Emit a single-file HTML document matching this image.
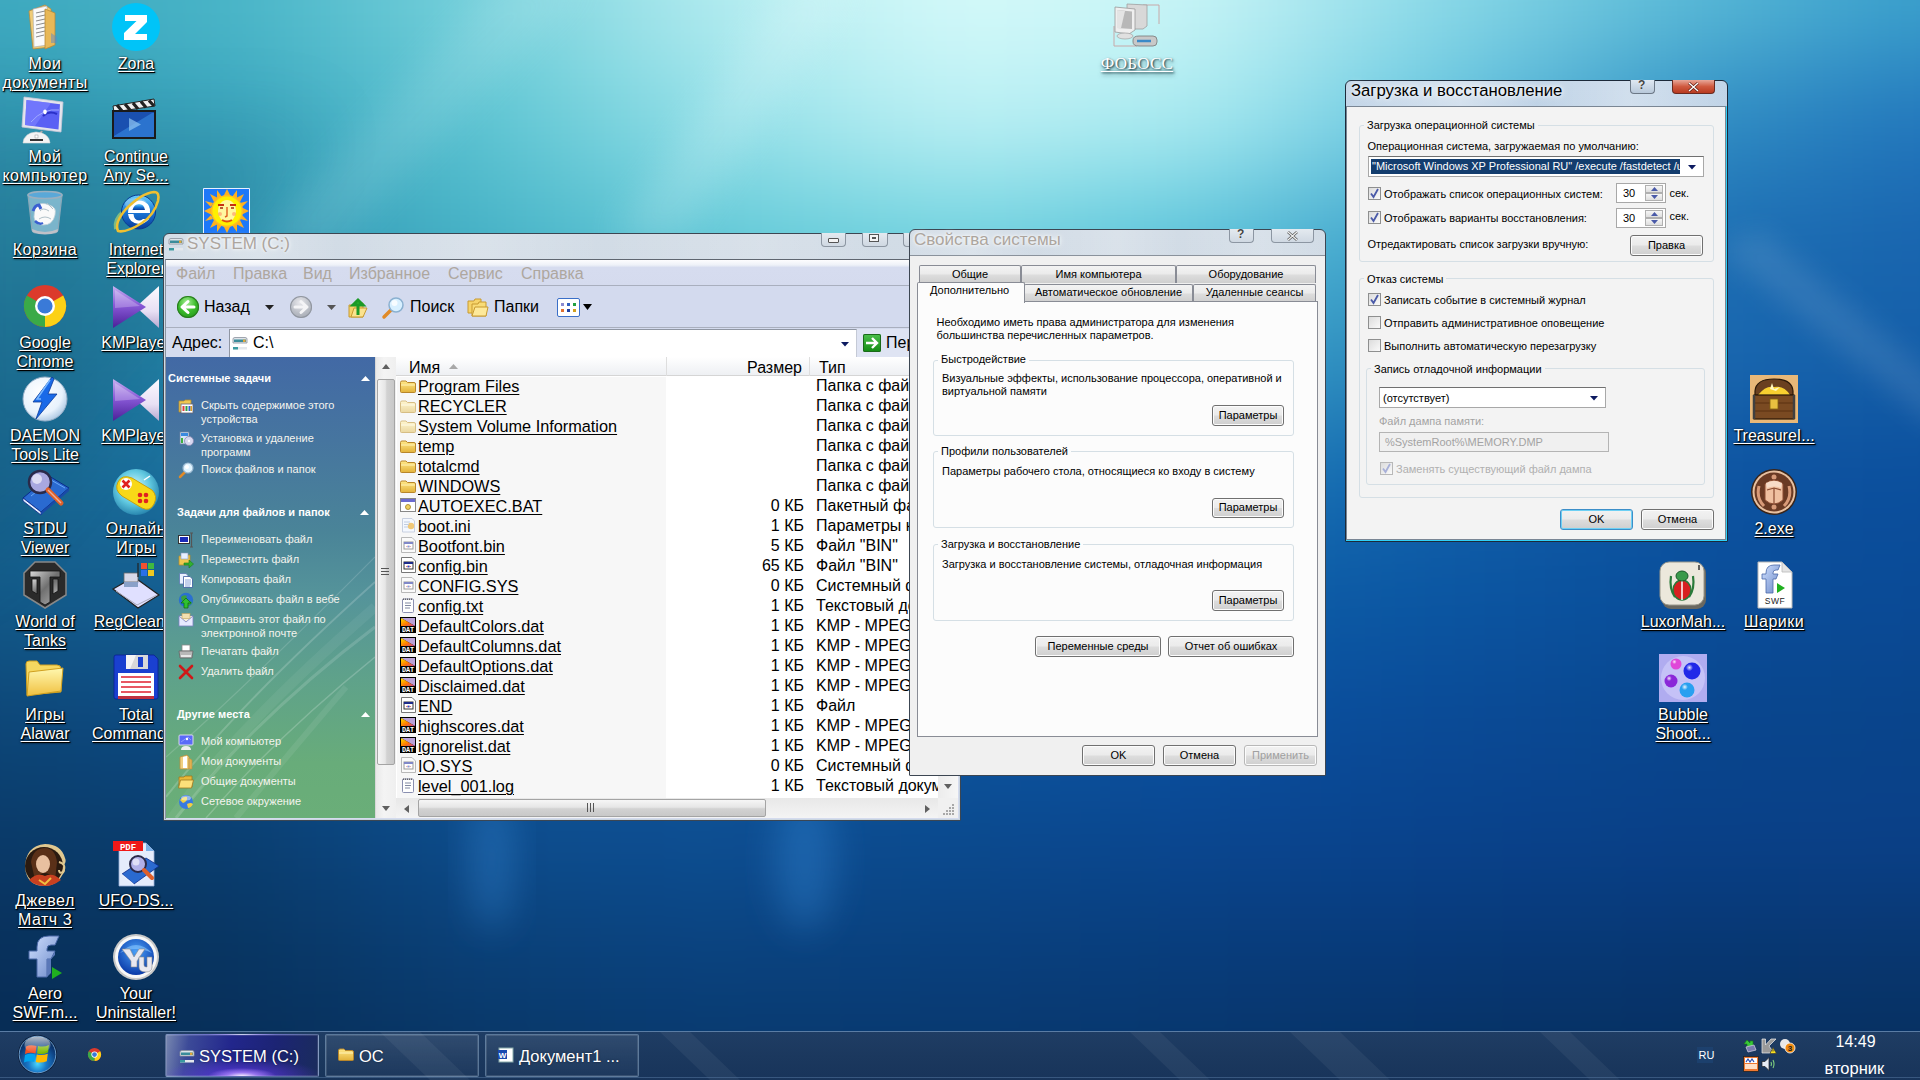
<!DOCTYPE html><html><head><meta charset="utf-8"><style>
*{margin:0;padding:0;box-sizing:border-box}
html,body{width:1920px;height:1080px;overflow:hidden}
body{position:relative;font-family:"Liberation Sans",sans-serif;background:#0b4a8a}
.a{position:absolute}
.t{position:absolute;white-space:nowrap;line-height:1}
.u{text-decoration:underline;text-underline-offset:2px}
svg{position:absolute;overflow:visible}
</style></head><body>

<svg width="0" height="0" style="position:absolute">
<defs>
 <linearGradient id="gFold" x1="0" y1="0" x2="0" y2="1"><stop offset="0" stop-color="#ffe98a"/><stop offset="1" stop-color="#e2b23a"/></linearGradient>
 <linearGradient id="gFoldP" x1="0" y1="0" x2="0" y2="1"><stop offset="0" stop-color="#fff6d0"/><stop offset="1" stop-color="#ead7a0"/></linearGradient>
 <linearGradient id="gDat" x1="0" y1="0" x2="1" y2="1"><stop offset="0" stop-color="#ffe600"/><stop offset=".55" stop-color="#ff7a00"/><stop offset="1" stop-color="#c040a0"/></linearGradient>
 <symbol id="folder" viewBox="0 0 16 13"><path d="M0.5 2.5 Q0.5 1 2 1 H6 L7.5 2.5 H14 Q15.5 2.5 15.5 4 V11.5 Q15.5 12.5 14.5 12.5 H1.5 Q0.5 12.5 0.5 11.5Z" fill="url(#gFold)" stroke="#b8862a" stroke-width="1"/><path d="M1 5 H15" stroke="#fff3b8" stroke-width="1"/></symbol>
 <symbol id="folderP" viewBox="0 0 16 13"><path d="M0.5 2.5 Q0.5 1 2 1 H6 L7.5 2.5 H14 Q15.5 2.5 15.5 4 V11.5 Q15.5 12.5 14.5 12.5 H1.5 Q0.5 12.5 0.5 11.5Z" fill="url(#gFoldP)" stroke="#d6bd84" stroke-width="1"/><path d="M1 5 H15" stroke="#fffbe8" stroke-width="1"/></symbol>
 <symbol id="dat" viewBox="0 0 16 16"><rect x="0" y="0" width="16" height="16" fill="#000"/><path d="M1 1 H15 V9 Z" fill="#b9a0d8"/><path d="M1 1 L15 9 H1Z" fill="url(#gDat)"/><text x="8" y="15.2" font-family="Liberation Mono" font-weight="bold" font-size="6.8" fill="#fff" text-anchor="middle">DAT</text></symbol>
 <symbol id="sys" viewBox="0 0 16 16"><path d="M1.5 0.5 H12 L15.5 4 V15.5 H1.5Z" fill="#fff" stroke="#777" /><rect x="4" y="5" width="9" height="7" fill="#fff" stroke="#333" stroke-width="1"/><rect x="4" y="5" width="9" height="2" fill="#1c2a8a"/><path d="M6 9.5 L7.5 8.5 V10.5Z M11 9.5 L9.5 8.5 V10.5Z" fill="#d02020"/><circle cx="8.5" cy="9.5" r="1" fill="#2050d0"/></symbol>
 <symbol id="sysP" viewBox="0 0 16 16"><path d="M1.5 0.5 H12 L15.5 4 V15.5 H1.5Z" fill="#fafafa" stroke="#b8b8b8" /><rect x="4" y="5" width="9" height="7" fill="#fff" stroke="#999" stroke-width="1"/><rect x="4" y="5" width="9" height="2" fill="#8088c8"/><path d="M6 9.5 L7.5 8.5 V10.5Z M11 9.5 L9.5 8.5 V10.5Z" fill="#e08080"/><circle cx="8.5" cy="9.5" r="1" fill="#80a0e0"/></symbol>
 <symbol id="bat" viewBox="0 0 16 16"><rect x="0.5" y="1.5" width="15" height="13" fill="#fff" stroke="#888"/><rect x="1" y="2" width="14" height="3" fill="#6a6ad0"/><circle cx="8" cy="10" r="2.5" fill="#f0d060" stroke="#a08020" stroke-width=".8"/></symbol>
 <symbol id="ini" viewBox="0 0 16 16"><path d="M2.5 1.5 H12 L14.5 4 V15 H2.5Z" fill="#f4f8ff" stroke="#c8d0e0"/><circle cx="11" cy="9" r="3.2" fill="#f0c878"/><path d="M4 5 H10 M4 7.5 H9 M4 10 H8" stroke="#c0cce0"/></symbol>
 <symbol id="txt" viewBox="0 0 16 16"><rect x="2.5" y="2" width="11" height="13.5" rx="1" fill="#fff" stroke="#8a8fb0"/><path d="M3.5 1.5 V3 M5.5 1.5 V3 M7.5 1.5 V3 M9.5 1.5 V3 M11.5 1.5 V3" stroke="#666"/><path d="M5 6 H11 M5 8.5 H11 M5 11 H10" stroke="#8088a0"/></symbol>
 <symbol id="drive" viewBox="0 0 16 16"><path d="M1 4 Q1 2.5 3 2.5 H13 Q15 2.5 15 4 V8 H1Z" fill="#dfe4ea" stroke="#8a929c" stroke-width=".8"/><rect x="2" y="4.5" width="12" height="2.5" fill="#3b8c9a"/><rect x="11" y="4.6" width="2.5" height="2.3" fill="#e8a838"/><rect x="1" y="12" width="14" height="2.5" fill="#e4e8ec"/><rect x="1" y="12" width="5" height="2.5" fill="#3a9aa0"/></symbol>
</defs></svg>

<div class="a" style="left:0;top:0;width:1920px;height:1080px;overflow:hidden"><div class="a" style="left:-150px;top:-150px;width:2220px;height:1380px;filter:blur(50px)">
<div class="a" style="left:0;top:0px;width:2220px;height:210px;background:linear-gradient(90deg,#3eaac0 0px,#3eaac0 150px,#4ab6c8 390px,#78d2dc 630px,#b4ecf0 870px,#d6fafa 1110px,#c8f4f6 1350px,#8cdae8 1590px,#5cbcd8 1830px,#3aa0cc 2070px,#3aa0cc 2220px)"></div>
<div class="a" style="left:0;top:210px;width:2220px;height:120px;background:linear-gradient(90deg,#3298b2 0px,#3298b2 150px,#3ca8c0 390px,#5cc4d2 630px,#94e0e8 870px,#bcf0f4 1110px,#a8eaf0 1350px,#64c4de 1590px,#3290c4 1830px,#2276bc 2070px,#2276bc 2220px)"></div>
<div class="a" style="left:0;top:330px;width:2220px;height:120px;background:linear-gradient(90deg,#2886a4 0px,#2886a4 150px,#3096b2 390px,#46b2c6 630px,#64cad8 870px,#74d4e0 1110px,#5cc4da 1350px,#3a9cc8 1590px,#1e70b4 1830px,#1864ae 2070px,#1864ae 2220px)"></div>
<div class="a" style="left:0;top:450px;width:2220px;height:120px;background:linear-gradient(90deg,#1e7498 0px,#1e7498 150px,#2484a8 390px,#329cbc 630px,#40aec8 870px,#46b2cc 1110px,#38a0c6 1350px,#2a84bc 1590px,#1a68b0 1830px,#145ea8 2070px,#145ea8 2220px)"></div>
<div class="a" style="left:0;top:570px;width:2220px;height:120px;background:linear-gradient(90deg,#186690 0px,#186690 150px,#1a70a0 390px,#2080b0 630px,#2488b8 870px,#2288bc 1110px,#1a78b8 1350px,#1262ac 1590px,#0d54a2 1830px,#0b4e9c 2070px,#0b4e9c 2220px)"></div>
<div class="a" style="left:0;top:690px;width:2220px;height:120px;background:linear-gradient(90deg,#135a88 0px,#135a88 150px,#145e94 390px,#1466a4 630px,#146aa8 870px,#126aac 1110px,#0d5ea8 1350px,#0b56a2 1590px,#0a4e9a 1830px,#0a4a96 2070px,#0a4a96 2220px)"></div>
<div class="a" style="left:0;top:810px;width:2220px;height:120px;background:linear-gradient(90deg,#0d4678 0px,#0d4678 150px,#0d4c86 390px,#10569a 630px,#0f58a0 870px,#0d56a0 1110px,#0b50a0 1350px,#0a4a96 1590px,#09468e 1830px,#09448a 2070px,#09448a 2220px)"></div>
<div class="a" style="left:0;top:930px;width:2220px;height:120px;background:linear-gradient(90deg,#0a3a68 0px,#0a3a68 150px,#0a3e70 390px,#0d4c8c 630px,#0d4e92 870px,#0b4a8e 1110px,#0a4690 1350px,#09428c 1590px,#094088 1830px,#0a4088 2070px,#0a4088 2220px)"></div>
<div class="a" style="left:0;top:1050px;width:2220px;height:120px;background:linear-gradient(90deg,#08305a 0px,#08305a 150px,#083460 390px,#0a3f76 630px,#0a427e 870px,#093f7c 1110px,#083c7a 1350px,#073876 1590px,#073670 1830px,#08366e 2070px,#08366e 2220px)"></div>
<div class="a" style="left:0;top:1170px;width:2220px;height:210px;background:linear-gradient(90deg,#062a52 0px,#062a52 150px,#072c56 390px,#083462 630px,#08376a 870px,#08366a 1110px,#073468 1350px,#063060 1590px,#062e5c 1830px,#062e5c 2070px,#062e5c 2220px)"></div>
</div></div>
<svg style="left:0;top:0" width="1920" height="1080"><defs>
<filter id="bl12" x="-50%" y="-50%" width="200%" height="200%"><feGaussianBlur stdDeviation="14"/></filter>
<filter id="bl40" x="-50%" y="-50%" width="200%" height="200%"><feGaussianBlur stdDeviation="40"/></filter>
<filter id="bl20" x="-50%" y="-50%" width="200%" height="200%"><feGaussianBlur stdDeviation="18"/></filter>
</defs>
<polygon points="-60,120 330,120 230,260 -60,600" fill="#0a4060" opacity=".16" filter="url(#bl40)"/>
<polygon points="250,250 330,250 590,-20 500,-20" fill="#ffffff" opacity=".10" filter="url(#bl20)"/>
<polygon points="610,240 680,240 860,-20 790,-20" fill="#ffffff" opacity=".14" filter="url(#bl20)"/>
<ellipse cx="492" cy="860" rx="22" ry="70" fill="#3a90e0" opacity=".35" filter="url(#bl20)"/>
<ellipse cx="805" cy="860" rx="30" ry="70" fill="#3a90e0" opacity=".35" filter="url(#bl20)"/>
<polygon points="1720,250 1760,230 1960,400 1940,430" fill="#ffffff" opacity=".10" filter="url(#bl12)"/>
</svg>
<svg width="0" height="0" style="position:absolute"><defs>
<linearGradient id="ieg" x1="0" y1="0" x2="0" y2="1"><stop offset="0" stop-color="#6ad0ff"/><stop offset=".5" stop-color="#1a78d8"/><stop offset="1" stop-color="#0a3a98"/></linearGradient>
<linearGradient id="kmpL" x1="0" y1="0" x2="0" y2="1"><stop offset="0" stop-color="#c8b0f0"/><stop offset=".45" stop-color="#8a5ad8"/><stop offset="1" stop-color="#4a2098"/></linearGradient>
<linearGradient id="kmpR" x1="0" y1="0" x2="0" y2="1"><stop offset="0" stop-color="#fcfaff"/><stop offset=".6" stop-color="#e8e0f4"/><stop offset="1" stop-color="#b8a8d0"/></linearGradient>
<radialGradient id="dmn" cx=".4" cy=".35" r=".7"><stop offset="0" stop-color="#ffffff"/><stop offset=".7" stop-color="#e8f2fc"/><stop offset="1" stop-color="#a8c4e0"/></radialGradient>
<radialGradient id="gpad" cx=".45" cy=".4" r=".6"><stop offset="0" stop-color="#d8fcff"/><stop offset=".6" stop-color="#60c8e0"/><stop offset="1" stop-color="#2a88b0"/></radialGradient>
<linearGradient id="wotg" x1="0" y1="0" x2="1" y2="1"><stop offset="0" stop-color="#d8d8d8"/><stop offset=".5" stop-color="#707070"/><stop offset="1" stop-color="#b0b0b0"/></linearGradient>
<linearGradient id="foldg" x1="0" y1="0" x2="0" y2="1"><stop offset="0" stop-color="#fff8b0"/><stop offset="1" stop-color="#f0c040"/></linearGradient>
<radialGradient id="yug" cx=".5" cy=".35" r=".65"><stop offset="0" stop-color="#4aa0f8"/><stop offset="1" stop-color="#0a3aa8"/></radialGradient>
<linearGradient id="aerog" x1="0" y1="0" x2="1" y2="1"><stop offset="0" stop-color="#d0e0ff"/><stop offset="1" stop-color="#6a88c8"/></linearGradient>
<radialGradient id="bubg" cx=".35" cy=".3" r=".7"><stop offset="0" stop-color="#ffffff" stop-opacity=".9"/><stop offset=".3" stop-color="#ffffff" stop-opacity="0"/></radialGradient>
</defs></svg>
<style>.dl{font-size:16px;line-height:19px;color:#fff;text-shadow:1px 1px 1px #000,1px 1px 2px rgba(0,0,0,.8),0 0 2px rgba(0,0,0,.6)}.dl span{text-decoration:underline;text-underline-offset:2px;text-decoration-thickness:1px}</style>
<svg style="left:21px;top:3px" width="48" height="48" viewBox="0 0 48 48"><path d="M8 8 L24 2 L30 6 V44 L12 46 Z" fill="#f0cc78" stroke="#b88a3a" stroke-width=".8"/><path d="M12 6 L26 3 V42 L13 44Z" fill="#fafafa" stroke="#aaa" stroke-width=".6"/><path d="M15 10 L24 8 M15 14 L24 12 M15 18 L24 16 M15 22 L24 20 M15 26 L24 24 M15 30 L24 28 M15 34 L23 32" stroke="#8a8a8a" stroke-width="1"/><path d="M24 6 L34 10 V42 L24 46Z" fill="#e8b858" stroke="#b88a3a" stroke-width=".8"/><path d="M30 30 L36 34 V40 L30 40Z" fill="#5a8ac8" opacity=".5"/></svg><div class="t dl" style="left:-15px;width:120px;text-align:center;top:53.75px;letter-spacing:.5px;"><span>Мои</span></div><div class="t dl" style="left:-15px;width:120px;text-align:center;top:72.75px;letter-spacing:.5px;"><span>документы</span></div>
<svg style="left:112px;top:3px" width="48" height="48" viewBox="0 0 48 48"><circle cx="24" cy="24" r="24" fill="#00c4f8"/><path d="M13 12 H35 V19 L23 31 H35 V37 H12 V30 L24.5 18 H13Z" fill="#fff"/></svg><div class="t dl" style="left:76px;width:120px;text-align:center;top:53.75px;"><span>Zona</span></div>
<svg style="left:21px;top:96px" width="48" height="48" viewBox="0 0 48 48"><path d="M3 1 L42 6 L40 36 L1 31Z" fill="#e4e4ec" stroke="#c8c8d8" stroke-width=".8"/><path d="M5.5 4 L39 8.2 L37.5 33.5 L4 29Z" fill="#5a60f4"/><path d="M5.5 4 L30 7 L14 30 L4 29Z" fill="#7a80ff" opacity=".7"/><path d="M10 26 Q22 12 38 14" stroke="#a0a8ff" stroke-width="1" fill="none"/><path d="M22 20 Q28 14 36 18" stroke="#2a30c8" stroke-width="2" fill="none"/><path d="M22.5 14.5 Q24 12.5 25.5 14.5 Q26.5 17 24 18.5 Q21.5 17 22.5 14.5Z" fill="#fff"/><path d="M21 35 L17 41" stroke="#aaa" stroke-width="2.2"/><path d="M2 47 Q3 37 15 36 Q28 37 29 47Z" fill="#f4f4f4" stroke="#d8d8d8" stroke-width=".6"/><rect x="9" y="43" width="13" height="2" fill="#333"/><rect x="14" y="39" width="3" height="3" fill="#fff" stroke="#999" stroke-width=".5"/></svg><div class="t dl" style="left:-15px;width:120px;text-align:center;top:146.75px;letter-spacing:.5px;"><span>Мой</span></div><div class="t dl" style="left:-15px;width:120px;text-align:center;top:165.75px;letter-spacing:.5px;"><span>компьютер</span></div>
<svg style="left:112px;top:96px" width="48" height="48" viewBox="0 0 48 48"><path d="M1 10 L42 3 L43 10 L2 16Z" fill="#f0f0f0" stroke="#222" stroke-width="1"/><path d="M5 9 L10 15 M13 8 L18 14 M21 7 L26 13 M29 5.5 L34 11.5 M37 4.5 L42 10" stroke="#222" stroke-width="3.2"/><rect x="1" y="15" width="42" height="27" fill="#1a50b0" stroke="#1a1a1a" stroke-width="2"/><path d="M2 40 L40 17 H42 V41 H2Z" fill="#3a90e8" opacity=".55"/><path d="M17 22 L29 28.5 L17 35Z" fill="#8ac0f0" opacity=".75"/></svg><div class="t dl" style="left:76px;width:120px;text-align:center;top:146.75px;"><span>Continue</span></div><div class="t dl" style="left:76px;width:120px;text-align:center;top:165.75px;"><span>Any Se...</span></div>
<svg style="left:21px;top:189px" width="48" height="48" viewBox="0 0 48 48"><path d="M7 6 H41 L37 41 Q36 44 32 44 H16 Q12 44 11 41Z" fill="#bfe0f0" fill-opacity=".55" stroke="#8aa8b8" stroke-width="1.2"/><ellipse cx="24" cy="6" rx="17" ry="3.5" fill="#5aa8d8" stroke="#9ab0c0" stroke-width="1.5"/><path d="M14 18 Q20 12 28 16 Q36 18 34 26 Q32 36 22 36 Q14 36 13 28Z" fill="#fafafa" stroke="#c0d0d8" stroke-width=".8"/><path d="M19 22 Q22 18 28 22 M18 30 Q24 26 30 30 M26 14 L32 20" stroke="#b0c0c8" stroke-width="1" fill="none"/><path d="M12 22 Q14 16 18 16 L20 20" stroke="#3a60d0" stroke-width="3" fill="none"/><path d="M14 32 Q18 36 22 34" stroke="#3a60d0" stroke-width="2.5" fill="none"/><path d="M11 40 Q24 46 37 40 L36.5 43 Q24 48 11.5 43Z" fill="#c0c0c8"/></svg><div class="t dl" style="left:-15px;width:120px;text-align:center;top:239.75px;letter-spacing:.5px;"><span>Корзина</span></div>
<svg style="left:112px;top:189px" width="48" height="48" viewBox="0 0 48 48"><path d="M4 40 Q2 30 12 22" stroke="#b8e070" stroke-width="4" fill="none" opacity=".6"/><circle cx="26.5" cy="23" r="17" fill="url(#ieg)"/><circle cx="26.5" cy="23" r="17" fill="none" stroke="#0a3a90" stroke-width="1"/><ellipse cx="24" cy="15" rx="11" ry="6" fill="#fff" opacity=".25"/><path d="M16 24 H38 Q39 16 32 12.5 Q26 10 20 14 Q16 18 16 24Z" fill="#fff"/><path d="M20.5 21 H33 Q32 15 27 15 Q22 15 20.5 21Z" fill="url(#ieg)"/><path d="M16 25 Q17 34 27 35 Q33 35 37 30 H31 Q29 31.5 27 31.5 Q22 31 21.5 25Z" fill="#fff"/><path d="M6 42 Q2 34 14 20 Q30 4 42 3 Q48 3 46 12 Q42 26 30 34 Q14 44 6 42Z" stroke="#f0c030" stroke-width="2.6" fill="none"/></svg><div class="t dl" style="left:76px;width:120px;text-align:center;top:239.75px;"><span>Internet</span></div><div class="t dl" style="left:76px;width:120px;text-align:center;top:258.75px;"><span>Explorer</span></div>
<svg style="left:21px;top:282px" width="48" height="48" viewBox="0 0 48 48"><circle cx="24" cy="24" r="21" fill="#db3a2c"/><path d="M24 24 L42.2 13.5 A21 21 0 0 1 24 45Z" fill="#fcd116"/><path d="M24 24 L24 45 A21 21 0 0 1 5.8 13.5Z" fill="#3aaa48"/><circle cx="24" cy="24" r="10" fill="#fff"/><circle cx="24" cy="24" r="7.6" fill="#3a7ad8"/></svg><div class="t dl" style="left:-15px;width:120px;text-align:center;top:332.75px;"><span>Google</span></div><div class="t dl" style="left:-15px;width:120px;text-align:center;top:351.75px;"><span>Chrome</span></div>
<svg style="left:112px;top:282px" width="48" height="48" viewBox="0 0 48 48"><path d="M47 4 L24 25 L47 46Z" fill="url(#kmpR)"/><path d="M1 4 L34 25 L1 46Z" fill="url(#kmpL)"/><path d="M3 8 L28 24 L3 26Z" fill="#fff" opacity=".25"/></svg><div class="t dl" style="left:76px;width:120px;text-align:center;top:332.75px;"><span>KMPlayer</span></div>
<svg style="left:21px;top:375px" width="48" height="48" viewBox="0 0 48 48"><circle cx="24" cy="24" r="22" fill="url(#dmn)" stroke="#98b0c8" stroke-width="1"/><path d="M31 2 L12 27 H21 L15 44 L36 19 H27 L33 4Z" fill="#1a6ae8" stroke="#0a3a98" stroke-width=".8"/><path d="M29 5 L16 24 H20" stroke="#7ab8ff" stroke-width="1.5" fill="none"/></svg><div class="t dl" style="left:-15px;width:120px;text-align:center;top:425.75px;"><span>DAEMON</span></div><div class="t dl" style="left:-15px;width:120px;text-align:center;top:444.75px;"><span>Tools Lite</span></div>
<svg style="left:112px;top:375px" width="48" height="48" viewBox="0 0 48 48"><path d="M47 4 L24 25 L47 46Z" fill="url(#kmpR)"/><path d="M1 4 L34 25 L1 46Z" fill="url(#kmpL)"/><path d="M3 8 L28 24 L3 26Z" fill="#fff" opacity=".25"/></svg><div class="t dl" style="left:76px;width:120px;text-align:center;top:425.75px;"><span>KMPlayer</span></div>
<svg style="left:21px;top:468px" width="48" height="48" viewBox="0 0 48 48"><path d="M2 30 L28 8 L48 20 L20 44Z" fill="#2a6ad0" stroke="#0a2a8a" stroke-width="1"/><path d="M2 30 L20 44 L20 47 L2 33Z" fill="#e8f0ff" stroke="#0a2a8a" stroke-width=".8"/><path d="M20 44 L48 20 V23 L20 47Z" fill="#1a4aa8"/><path d="M10 28 L30 12 L44 20" stroke="#6aa8f8" stroke-width="1" fill="none"/><circle cx="19" cy="14" r="11" fill="#a8a8e0" stroke="#2a2a4a" stroke-width="2.5"/><circle cx="16" cy="11" r="5" fill="#fff" opacity=".6"/><path d="M27 22 L40 35" stroke="#e0602a" stroke-width="5" stroke-linecap="round"/><path d="M27 22 L40 35" stroke="#fff" stroke-width="1.4" opacity=".5"/></svg><div class="t dl" style="left:-15px;width:120px;text-align:center;top:518.75px;"><span>STDU</span></div><div class="t dl" style="left:-15px;width:120px;text-align:center;top:537.75px;"><span>Viewer</span></div>
<svg style="left:112px;top:468px" width="48" height="48" viewBox="0 0 48 48"><circle cx="24" cy="24" r="23" fill="url(#gpad)"/><path d="M6 14 Q10 6 20 10 L40 22 Q46 28 42 36 Q38 44 30 40 L10 28 Q2 22 6 14Z" fill="#f8d818" stroke="#c8a010" stroke-width="1"/><circle cx="14" cy="16" r="6" fill="#fff"/><path d="M10.5 12.5 L17.5 19.5 M17.5 12.5 L10.5 19.5" stroke="#e02020" stroke-width="2.6"/><circle cx="28" cy="27" r="2.3" fill="#e02020"/><circle cx="34" cy="27" r="2.3" fill="#e02020"/><circle cx="28" cy="33" r="2.3" fill="#e02020"/><circle cx="34" cy="33" r="2.3" fill="#e02020"/><path d="M32 12 L38 8" stroke="#fff" stroke-width="1.5"/></svg><div class="t dl" style="left:76px;width:120px;text-align:center;top:518.75px;letter-spacing:.5px;"><span>Онлайн</span></div><div class="t dl" style="left:76px;width:120px;text-align:center;top:537.75px;letter-spacing:.5px;"><span>Игры</span></div>
<svg style="left:21px;top:561px" width="48" height="48" viewBox="0 0 48 48"><path d="M14 1 H34 L45 12 V34 L24 47 L3 34 V12Z" fill="#2a2a2a" stroke="#888" stroke-width="1.5"/><path d="M9 10 H39 V16 H29 V41 L24 44 L19 41 V16 H9Z" fill="url(#wotg)" stroke="#111" stroke-width=".8"/><path d="M11 18 H16 V33 L11 30Z M37 18 H32 V33 L37 30Z" fill="url(#wotg)" stroke="#111" stroke-width=".8"/></svg><div class="t dl" style="left:-15px;width:120px;text-align:center;top:611.75px;"><span>World of</span></div><div class="t dl" style="left:-15px;width:120px;text-align:center;top:630.75px;"><span>Tanks</span></div>
<svg style="left:112px;top:561px" width="48" height="48" viewBox="0 0 48 48"><path d="M1 28 L22 16 L47 34 L26 47Z" fill="#e0e0ff" stroke="#222" stroke-width="1.2"/><path d="M4 30 L25 44 L45 34" fill="none" stroke="#aab" stroke-width="1"/><rect x="12" y="12" width="14" height="9" fill="#d8d8e8" stroke="#666" stroke-width=".8"/><rect x="12" y="21" width="14" height="5" fill="#8aa0c8"/><rect x="29" y="2" width="6" height="6" fill="#f05030"/><rect x="36" y="2" width="6" height="6" fill="#40b840"/><rect x="29" y="9" width="6" height="6" fill="#2a70e8"/><rect x="36" y="9" width="6" height="6" fill="#f0c820"/><path d="M26 2 V16" stroke="#222" stroke-width="1.2"/></svg><div class="t dl" style="left:76px;width:120px;text-align:center;top:611.75px;"><span>RegClean...</span></div>
<svg style="left:21px;top:654px" width="48" height="48" viewBox="0 0 48 48"><path d="M5 10 Q5 7 8 7 H16 L19 11 H36 Q40 11 40 15 V38 L6 41Z" fill="#f6d860" stroke="#d0a020" stroke-width="1"/><path d="M6 42 L8 18 L42 14 L40 37Z" fill="url(#foldg)" stroke="#d0a020" stroke-width="1"/></svg><div class="t dl" style="left:-15px;width:120px;text-align:center;top:704.75px;letter-spacing:.5px;"><span>Игры</span></div><div class="t dl" style="left:-15px;width:120px;text-align:center;top:723.75px;"><span>Alawar</span></div>
<svg style="left:112px;top:654px" width="48" height="48" viewBox="0 0 48 48"><path d="M2 3 Q2 1 4 1 H42 L46 5 V43 Q46 45 44 45 H4 Q2 45 2 43Z" fill="#1a40d0" stroke="#0a2090" stroke-width=".8"/><rect x="14" y="1" width="22" height="14" fill="#d8d8d8"/><path d="M14 1 H24 L18 15 H14Z" fill="#f4f4f4"/><rect x="26" y="3" width="5" height="10" fill="#1a40d0"/><rect x="6" y="19" width="36" height="26" fill="#fff"/><rect x="6" y="42" width="36" height="3" fill="#c03040"/><path d="M9 23 H39 M9 28 H39 M9 33 H39 M9 38 H39" stroke="#e02030" stroke-width="1.4"/></svg><div class="t dl" style="left:76px;width:120px;text-align:center;top:704.75px;"><span>Total</span></div><div class="t dl" style="left:76px;width:120px;text-align:center;top:723.75px;"><span>Commander</span></div>
<svg style="left:21px;top:840px" width="48" height="48" viewBox="0 0 48 48"><path d="M24 4 Q40 4 44 18 Q46 22 42 26 Q46 30 42 34 Q36 46 24 46 Q6 46 4 28 Q4 6 24 4Z" fill="#e0c890"/><circle cx="23" cy="26" r="19" fill="#2a1a10"/><path d="M10 22 Q12 8 24 8 Q34 8 36 22 L34 40 Q24 26 14 40Z" fill="#5a3018"/><ellipse cx="22" cy="24" rx="7" ry="9" fill="#e8c0a0"/><path d="M8 40 Q16 32 24 36 Q32 32 40 40 Q32 46 24 46 Q14 46 8 40Z" fill="#c84020"/><path d="M18 40 L24 44 L30 38" stroke="#f0c040" stroke-width="2" fill="none"/><path d="M38 22 Q46 24 42 32 Q38 34 38 30" stroke="#e0c890" stroke-width="2" fill="none"/></svg><div class="t dl" style="left:-15px;width:120px;text-align:center;top:890.75px;letter-spacing:.5px;"><span>Джевел</span></div><div class="t dl" style="left:-15px;width:120px;text-align:center;top:909.75px;letter-spacing:.5px;"><span>Матч 3</span></div>
<svg style="left:112px;top:840px" width="48" height="48" viewBox="0 0 48 48"><path d="M7 3 H34 L42 11 V46 H7Z" fill="#e4ecfc" stroke="#9ab0d8" stroke-width=".8"/><path d="M34 3 V11 H42" fill="#7ab0e8"/><rect x="1" y="1" width="30" height="10" fill="#f01818"/><text x="16" y="9.6" font-family="Liberation Mono" font-size="9" font-weight="bold" fill="#fff" text-anchor="middle">PDF</text><path d="M10 34 L34 18 L47 26 L22 44Z" fill="#2a6ad0" stroke="#0a2a8a" stroke-width=".8"/><path d="M10 34 L22 44 V46 L10 36Z" fill="#e8f0ff"/><circle cx="26" cy="24" r="8" fill="#b0b0e8" stroke="#2a2a4a" stroke-width="2"/><circle cx="24" cy="22" r="3.5" fill="#fff" opacity=".6"/><path d="M32 30 L40 38" stroke="#e0602a" stroke-width="4" stroke-linecap="round"/></svg><div class="t dl" style="left:76px;width:120px;text-align:center;top:890.75px;"><span>UFO-DS...</span></div>
<svg style="left:21px;top:933px" width="48" height="48" viewBox="0 0 48 48"><path d="M16 14 Q16 3 28 3 H38 L34 12 H30 Q26 12 26 16 V18 H34 L30 26 H26 V44 L16 44 V26 H8 V18 H16Z" fill="url(#aerog)" stroke="#4a68a8" stroke-width="1"/><path d="M26 44 L30 40 V26 L26 26Z M30 26 L34 18 V22Z" fill="#5a78b8"/><path d="M31 34 L41 40 L31 46Z" fill="#20b020"/></svg><div class="t dl" style="left:-15px;width:120px;text-align:center;top:983.75px;"><span>Aero</span></div><div class="t dl" style="left:-15px;width:120px;text-align:center;top:1002.75px;"><span>SWF.m...</span></div>
<svg style="left:112px;top:933px" width="48" height="48" viewBox="0 0 48 48"><circle cx="24" cy="24" r="23" fill="#c8c8c8"/><circle cx="24" cy="24" r="21" fill="#f8f8f8"/><circle cx="24" cy="24" r="18" fill="url(#yug)"/><path d="M8 20 Q24 4 40 20 Q24 12 8 20Z" fill="#8ac8ff" opacity=".6"/><path d="M10 16 H18 L22 24 L27 16 H33 L25 28 V34 H19 V28Z" fill="#e8e8f0" stroke="#888" stroke-width=".6"/><path d="M27 24 H32 V32 Q32 34 35 34 V24 H40 V34 Q40 39 34 39 Q27 39 27 34Z" fill="#e8e8f0" stroke="#888" stroke-width=".6"/></svg><div class="t dl" style="left:76px;width:120px;text-align:center;top:983.75px;"><span>Your</span></div><div class="t dl" style="left:76px;width:120px;text-align:center;top:1002.75px;"><span>Uninstaller!</span></div>
<svg style="left:203px;top:188px" width="48" height="48" viewBox="0 0 48 48"><rect x="0" y="0" width="47" height="46" fill="#1e78f8"/><path d="M0.5 0.5 H46.5 V45.5 H0.5Z" fill="none" stroke="#e8f0ff" stroke-width="1"/><g fill="#ffb020"><path d="M24 1 L28 9 L20 9Z M24 45 L28 37 L20 37Z M1 23 L9 19 L9 27Z M46 23 L38 19 L38 27Z M7 6 L15 10 L11 14Z M41 6 L33 10 L37 14Z M7 40 L15 36 L11 32Z M41 40 L33 36 L37 32Z M14 2 L19 9 L14 11Z M34 2 L29 9 L34 11Z M14 44 L19 37 L14 35Z M34 44 L29 37 L34 35Z M2 13 L10 15 L8 19Z M45 13 L37 15 L39 19Z M2 33 L10 31 L8 27Z M45 33 L37 31 L39 27Z"/></g><circle cx="24" cy="23" r="16" fill="#ffc020"/><circle cx="24" cy="23" r="14.5" fill="#fff000"/><ellipse cx="24" cy="23" rx="9" ry="11" fill="#fff8a0"/><path d="M15 17 H21 M27 17 H33" stroke="#c83010" stroke-width="2"/><path d="M17 20 H20 M28 20 H31" stroke="#a02810" stroke-width="1.5"/><path d="M24 19 V28 L22 29" stroke="#e06020" stroke-width="1.4" fill="none"/><path d="M19 32 Q24 35 29 32" stroke="#e05010" stroke-width="2" fill="none"/><circle cx="17" cy="26" r="2" fill="#ff9060" opacity=".6"/><circle cx="31" cy="26" r="2" fill="#ff9060" opacity=".6"/></svg>
<svg style="left:1113px;top:2px" width="48" height="48" viewBox="0 0 48 48"><path d="M1 24 V44 H24 M46 3 V22 M30 3 H46" stroke="#c8a8a8" stroke-width="1" fill="none"/><path d="M14 2 L34 3 V24 L30 27 H14Z" fill="#d8d8d8" stroke="#a0a0a0" stroke-width=".8"/><path d="M2 5 L22 7 V28 L16 32 L2 30Z" fill="#efefef" stroke="#999" stroke-width=".8"/><path d="M4 8 L19 9.5 V27 L4 26Z" fill="#b8b8b8"/><path d="M4 8 L12 9 L8 26 H4Z" fill="#e4e4e4"/><ellipse cx="12" cy="34" rx="8" ry="3" fill="#e0e0e0" stroke="#aaa" stroke-width=".8"/><path d="M20 38 Q20 34 26 34 H40 Q44 34 44 38 V40 Q44 44 40 44 H26 Q20 44 20 40Z" fill="#c8c8c8" stroke="#777" stroke-width=".8"/><path d="M24 39 H38" stroke="#3a8ac8" stroke-width="2.5"/></svg>
<div class="t dl" style="left:1077px;width:120px;text-align:center;top:53.5px;font-family:'Liberation Serif',serif;font-size:17px;letter-spacing:.3px;text-shadow:1px 1px 2px rgba(0,30,40,.9),1px 3px 4px rgba(0,40,50,.5)"><span>ФОБОСС</span></div>
<svg style="left:1750px;top:375px" width="48" height="48" viewBox="0 0 48 48"><rect x="0" y="0" width="48" height="48" fill="#e8b878"/><path d="M5 16 Q6 4 24 4 Q42 4 43 16 V20 H5Z" fill="#6a4020" stroke="#2a1808" stroke-width="1.2"/><path d="M8 20 Q16 10 24 12 Q34 10 40 20Z" fill="#f8d030"/><path d="M20 14 L22 8 L24 14 L30 12 L26 16Z" fill="#fff8c0"/><rect x="4" y="20" width="40" height="24" fill="#7a4a22" stroke="#2a1808" stroke-width="1.2"/><path d="M4 28 H44 M4 36 H44" stroke="#5a3010" stroke-width="1"/><path d="M4 20 V44 M44 20 V44" stroke="#404040" stroke-width="2.5"/><rect x="20" y="24" width="8" height="10" fill="#e8c040" stroke="#806010" stroke-width=".8"/></svg><div class="t dl" style="left:1714px;width:120px;text-align:center;top:425.75px;"><span>TreasureI...</span></div>
<svg style="left:1750px;top:468px" width="48" height="48" viewBox="0 0 48 48"><circle cx="24" cy="24" r="23" fill="#3a2418"/><circle cx="24" cy="24" r="21.5" fill="#e8c0a0"/><circle cx="24" cy="24" r="19.5" fill="#6a3a24"/><path d="M9 18 Q6 30 14 38 M39 18 Q42 30 34 38" stroke="#d89a78" stroke-width="3" fill="none"/><circle cx="24" cy="9" r="2.5" fill="#d89a78"/><circle cx="24" cy="39" r="2.5" fill="#d89a78"/><path d="M15 16 Q24 8 33 16 L33 32 Q24 40 15 32Z" fill="#f0c0a0" stroke="#8a4a30" stroke-width="1"/><path d="M16 15 Q24 11 32 15 L31 20 Q24 17 17 20Z" fill="#f8dcc8"/><path d="M24 20 V36 M17 22 L24 20 L31 22" stroke="#8a4a30" stroke-width="1.2" fill="none"/></svg><div class="t dl" style="left:1714px;width:120px;text-align:center;top:518.75px;"><span>2.exe</span></div>
<svg style="left:1659px;top:561px" width="48" height="48" viewBox="0 0 48 48"><rect x="3" y="3" width="44" height="45" rx="9" fill="#6a6860"/><rect x="1" y="1" width="44" height="43" rx="9" fill="#ece8dc" stroke="#9a988c" stroke-width="1"/><path d="M12 15 Q10 28 16 36 M34 15 Q36 28 30 36" stroke="#2a7a3a" stroke-width="2.2" fill="none"/><ellipse cx="23" cy="29" rx="9" ry="10" fill="#d82020" stroke="#2a7a3a" stroke-width="1.5"/><path d="M23 19 V39" stroke="#fff" stroke-width="1.5"/><ellipse cx="23" cy="15" rx="6" ry="5" fill="#3a9a4a" stroke="#1a5a2a" stroke-width="1"/><path d="M40 4 V9" stroke="#333" stroke-width="1.5"/></svg><div class="t dl" style="left:1623px;width:120px;text-align:center;top:611.75px;"><span>LuxorMah...</span></div>
<svg style="left:1750px;top:561px" width="48" height="48" viewBox="0 0 48 48"><path d="M8 1 H32 L42 11 V47 H8Z" fill="#fff" stroke="#b8b8b8" stroke-width="1"/><path d="M32 1 V11 H42Z" fill="#e4e4e4" stroke="#b8b8b8" stroke-width=".8"/><path d="M16 12 Q16 4 24 4 H30 L28 9 H26 Q23 9 23 12 V13 H28 L26 18 H23 V32 H16 V18 H12 V13 H16Z" fill="url(#aerog)" stroke="#4a68a8" stroke-width=".8"/><path d="M27 22 L35 27 L27 32Z" fill="#20b020"/><text x="25" y="43" font-family="Liberation Sans" font-size="8.5" fill="#222" text-anchor="middle" letter-spacing=".5">SWF</text></svg><div class="t dl" style="left:1714px;width:120px;text-align:center;top:611.75px;letter-spacing:.5px;"><span>Шарики</span></div>
<svg style="left:1659px;top:654px" width="48" height="48" viewBox="0 0 48 48"><rect x="0" y="0" width="48" height="48" fill="#b0acf0"/><circle cx="24" cy="24" r="22" fill="#d4d0fc" opacity=".6"/><circle cx="17" cy="10" r="5.5" fill="#e048d8"/><circle cx="17" cy="10" r="5.5" fill="url(#bubg)"/><circle cx="33" cy="17" r="8.5" fill="#2028e8"/><circle cx="33" cy="17" r="8.5" fill="url(#bubg)"/><circle cx="12" cy="27" r="6.5" fill="#8a28d8"/><circle cx="12" cy="27" r="6.5" fill="url(#bubg)"/><circle cx="28" cy="36" r="7.5" fill="#28a0f0"/><circle cx="28" cy="36" r="7.5" fill="url(#bubg)"/></svg><div class="t dl" style="left:1623px;width:120px;text-align:center;top:704.75px;"><span>Bubble</span></div><div class="t dl" style="left:1623px;width:120px;text-align:center;top:723.75px;"><span>Shoot...</span></div>
<div class="a" style="left:163px;top:233px;width:798px;height:588px;border:1px solid #3c4652;border-radius:6px 6px 1px 1px;background:linear-gradient(90deg,rgba(255,255,255,.05) 0%,rgba(255,255,255,.2) 12%,rgba(255,255,255,0) 22%,rgba(255,255,255,.18) 40%,rgba(255,255,255,0) 55%,rgba(255,255,255,.15) 75%,rgba(255,255,255,0) 90%),linear-gradient(180deg,#d2dce6 0%,#c6d2de 100%);"></div>
<svg style="left:168px;top:236px" width="16" height="16"><use href="#drive" width="16" height="16"/></svg>
<div class="t" style="left:187px;top:235.00px;font-size:17px;color:#aca59e;font-weight:normal;text-shadow:0 0 6px #fff,0 0 3px #fff;">SYSTEM (C:)</div>
<div class="a" style="left:821px;top:233px;width:25px;height:14px;border:1px solid #8c96a2;border-top:none;border-radius:0 0 4px 4px;background:linear-gradient(#e4eaf0,#cfd8e2)"></div>
<div class="a" style="left:828px;top:238px;width:11px;height:5px;border:1px solid #555;border-radius:1px;background:#f4f4f4"></div>
<div class="a" style="left:862px;top:233px;width:26px;height:14px;border:1px solid #8c96a2;border-top:none;border-radius:0 0 4px 4px;background:linear-gradient(#e4eaf0,#cfd8e2)"></div>
<div class="a" style="left:869px;top:234px;width:10px;height:8px;border:1px solid #555;background:#f4f4f4"><div class="a" style="left:2px;top:2px;width:4px;height:2px;border:1px solid #555"></div></div>
<div class="a" style="left:903px;top:233px;width:8px;height:14px;border:1px solid #8c96a2;border-top:none;border-right:none;border-radius:0 0 0 4px;background:linear-gradient(#e4eaf0,#cfd8e2)"></div>
<div class="a" style="left:165px;top:259px;width:794px;height:560px;background:#d4dbee;border-top:1px solid #5f6670;border-left:1px solid #8a93a0;"></div>
<div class="a" style="left:166px;top:260px;width:793px;height:25px;background:linear-gradient(180deg,#fdfdfe 0%,#eef1f8 20%,#d6dcef 30%,#d5dbee 100%)"></div>
<div class="a" style="left:166px;top:285px;width:793px;height:1px;background:#a9afbe"></div>
<div class="t" style="left:176px;top:265.72px;font-size:16px;color:#aea79f;font-weight:normal;">Файл</div>
<div class="t" style="left:233px;top:265.72px;font-size:16px;color:#aea79f;font-weight:normal;">Правка</div>
<div class="t" style="left:303px;top:265.72px;font-size:16px;color:#aea79f;font-weight:normal;">Вид</div>
<div class="t" style="left:349px;top:265.72px;font-size:16px;color:#aea79f;font-weight:normal;">Избранное</div>
<div class="t" style="left:448px;top:265.72px;font-size:16px;color:#aea79f;font-weight:normal;">Сервис</div>
<div class="t" style="left:521px;top:265.72px;font-size:16px;color:#aea79f;font-weight:normal;">Справка</div>
<div class="a" style="left:166px;top:286px;width:793px;height:41px;background:#d3daee"></div>
<div class="a" style="left:166px;top:327px;width:793px;height:1px;background:#a9afbe"></div>
<div class="a" style="left:177px;top:296px;width:22px;height:22px;border-radius:50%;background:radial-gradient(circle at 45% 30%,#a8f098 0%,#3cbc2c 45%,#1a8a14 100%);box-shadow:0 0 0 1px #2a7a20 inset"></div>
<svg style="left:177px;top:296px" width="22" height="22"><path d="M5 11 L11 5.5 M5 11 L11 16.5 M5 11 H17" stroke="#fff" stroke-width="3" stroke-linecap="round" fill="none"/></svg>
<div class="t" style="left:204px;top:299.12px;font-size:16px;color:#000;font-weight:normal;">Назад</div>
<svg style="left:265px;top:305px" width="10" height="6"><path d="M0 0 H9 L4.5 5Z" fill="#222"/></svg>
<div class="a" style="left:290px;top:296px;width:22px;height:22px;border-radius:50%;background:radial-gradient(circle at 45% 30%,#e8e8ec 0%,#b8bcc4 55%,#9a9ea8 100%);box-shadow:0 0 0 1px #9096a0 inset"></div>
<svg style="left:290px;top:296px" width="22" height="22"><path d="M17 11 L11 5.5 M17 11 L11 16.5 M17 11 H5" stroke="#f4f4f6" stroke-width="3" stroke-linecap="round" fill="none"/></svg>
<svg style="left:327px;top:305px" width="10" height="6"><path d="M0 0 H9 L4.5 5Z" fill="#555"/></svg>
<svg style="left:348px;top:296px" width="20" height="23"><path d="M1 9 H8 L9 7 H15 V21 H1Z" fill="#f6d46a" stroke="#c89a30"/><path d="M3 21 L6 12 H19 L15 21Z" fill="#fbe38e" stroke="#c89a30"/><path d="M10 19 V8 M10 4 L5 9 H15Z" stroke="#1c9a28" stroke-width="3" fill="#2cb830"/></svg>
<svg style="left:382px;top:296px" width="23" height="23"><line x1="2" y1="21" x2="9" y2="14" stroke="#e08a28" stroke-width="3.5" stroke-linecap="round"/><circle cx="14" cy="9" r="7" fill="#d8f0ff" stroke="#8ab0d0" stroke-width="1.5"/><circle cx="12.5" cy="7" r="3" fill="#fff" opacity=".8"/></svg>
<div class="t" style="left:410px;top:299.12px;font-size:16px;color:#000;font-weight:normal;">Поиск</div>
<svg style="left:467px;top:297px" width="22" height="21"><path d="M1 4 H7 L8 2 H14 V16 H1Z" fill="#f6d46a" stroke="#c89a30"/><path d="M5 7 H11 L12 5 H19 V19 H5Z" fill="#f8dc78" stroke="#c89a30"/><path d="M5 19 L8 10 H21 L19 19Z" fill="#fde99a" stroke="#c89a30"/></svg>
<div class="t" style="left:494px;top:299.12px;font-size:16px;color:#000;font-weight:normal;">Папки</div>
<div class="a" style="left:557px;top:298px;width:23px;height:19px;border:1px solid #3a6fc8;border-radius:2px;background:#fff"></div>
<svg style="left:560px;top:302px" width="18" height="12"><rect x="1" y="1" width="3" height="3" fill="#8a8ad0"/><rect x="7" y="1" width="3" height="3" fill="#3060c0"/><rect x="13" y="1" width="3" height="3" fill="#20a040"/><rect x="1" y="7" width="3" height="3" fill="#e07030"/><rect x="7" y="7" width="3" height="3" fill="#2040a0"/><rect x="13" y="7" width="3" height="3" fill="#d0a020"/></svg>
<svg style="left:583px;top:304px" width="10" height="7"><path d="M0 0 H9 L4.5 6Z" fill="#000"/></svg>
<div class="t" style="left:172px;top:335.32px;font-size:16px;color:#000;font-weight:normal;">Адрес:</div>
<div class="a" style="left:229px;top:329px;width:628px;height:28px;background:#fff;border:1px solid #8f96a3;border-bottom:none;border-right:1px solid #c5cad6"></div>
<svg style="left:232px;top:335px" width="16" height="16"><use href="#drive" width="16" height="16"/></svg>
<div class="t" style="left:253px;top:335.32px;font-size:16px;color:#000;font-weight:normal;">C:\</div>
<svg style="left:841px;top:342px" width="9" height="5"><path d="M0 0 H8 L4 4.5Z" fill="#0c1a60"/></svg>
<div class="a" style="left:857px;top:329px;width:52px;height:28px;background:#dfe4f3"></div>
<div class="a" style="left:863px;top:334px;width:18px;height:18px;border-radius:2px;background:linear-gradient(#4cc04c,#128a12);box-shadow:0 0 0 1px #1a6a1a inset"></div>
<svg style="left:863px;top:334px" width="18" height="18"><path d="M3 9 H14 M9 4 L14 9 L9 14" stroke="#fff" stroke-width="2.4" fill="none" stroke-linejoin="miter"/></svg>
<div class="t" style="left:886px;top:335.32px;font-size:16px;color:#000;font-weight:normal;">Переход</div>
<div class="a" style="left:166px;top:357px;width:209px;height:461px;overflow:hidden;background:linear-gradient(180deg,#4269a5 0%,#46759f 18%,#4a8498 38%,#55949a 52%,#5fa28a 70%,#68ac7a 88%,#6aae78 100%)"><svg style="left:0;top:0" width="209" height="461"><defs><linearGradient id="sw" x1="0" y1="1" x2="1" y2="0"><stop offset="0" stop-color="#fff" stop-opacity="0"/><stop offset=".5" stop-color="#fff" stop-opacity=".22"/><stop offset="1" stop-color="#fff" stop-opacity="0"/></linearGradient></defs><g fill="none" stroke="#fff"><path d="M0 470 Q60 380 209 250" stroke-width="10" opacity=".06"/><path d="M0 440 Q70 350 209 225" stroke-width="2" opacity=".18"/><path d="M10 461 Q90 360 209 270" stroke-width="3" opacity=".14"/><path d="M40 461 Q110 380 209 300" stroke-width="1.5" opacity=".2"/><path d="M70 461 Q120 400 180 330" stroke-width="6" opacity=".08"/><path d="M0 400 Q80 330 209 200" stroke-width="1.2" opacity=".15"/></g></svg></div>
<div class="t" style="left:168px;top:372.71px;font-size:11px;color:#fff;font-weight:bold;">Системные задачи</div>
<svg style="left:361px;top:376px" width="9" height="5"><path d="M0 5 L4.5 0 L9 5Z" fill="#fff"/></svg>
<div class="t" style="left:201px;top:399.71px;font-size:11px;color:#f4f4ee;font-weight:normal;">Скрыть содержимое этого</div>
<div class="t" style="left:201px;top:413.71px;font-size:11px;color:#f4f4ee;font-weight:normal;">устройства</div>
<div class="t" style="left:201px;top:432.71px;font-size:11px;color:#f4f4ee;font-weight:normal;">Установка и удаление</div>
<div class="t" style="left:201px;top:446.71px;font-size:11px;color:#f4f4ee;font-weight:normal;">программ</div>
<div class="t" style="left:201px;top:463.71px;font-size:11px;color:#f4f4ee;font-weight:normal;">Поиск файлов и папок</div>
<div class="t" style="left:177px;top:507.21px;font-size:11px;color:#fff;font-weight:bold;">Задачи для файлов и папок</div>
<svg style="left:360px;top:510px" width="9" height="5"><path d="M0 5 L4.5 0 L9 5Z" fill="#fff"/></svg>
<div class="t" style="left:201px;top:534.21px;font-size:11px;color:#f4f4ee;font-weight:normal;">Переименовать файл</div>
<div class="t" style="left:201px;top:554.41px;font-size:11px;color:#f4f4ee;font-weight:normal;">Переместить файл</div>
<div class="t" style="left:201px;top:574.01px;font-size:11px;color:#f4f4ee;font-weight:normal;">Копировать файл</div>
<div class="t" style="left:201px;top:594.21px;font-size:11px;color:#f4f4ee;font-weight:normal;">Опубликовать файл в вебе</div>
<div class="t" style="left:201px;top:613.71px;font-size:11px;color:#f4f4ee;font-weight:normal;">Отправить этот файл по</div>
<div class="t" style="left:201px;top:627.71px;font-size:11px;color:#f4f4ee;font-weight:normal;">электронной почте</div>
<div class="t" style="left:201px;top:646.11px;font-size:11px;color:#f4f4ee;font-weight:normal;">Печатать файл</div>
<div class="t" style="left:201px;top:665.71px;font-size:11px;color:#f4f4ee;font-weight:normal;">Удалить файл</div>
<div class="t" style="left:177px;top:708.71px;font-size:11px;color:#fff;font-weight:bold;">Другие места</div>
<svg style="left:361px;top:712px" width="9" height="5"><path d="M0 5 L4.5 0 L9 5Z" fill="#fff"/></svg>
<div class="t" style="left:201px;top:736.01px;font-size:11px;color:#f4f4ee;font-weight:normal;">Мой компьютер</div>
<div class="t" style="left:201px;top:756.31px;font-size:11px;color:#f4f4ee;font-weight:normal;">Мои документы</div>
<div class="t" style="left:201px;top:775.91px;font-size:11px;color:#f4f4ee;font-weight:normal;">Общие документы</div>
<div class="t" style="left:201px;top:796.31px;font-size:11px;color:#f4f4ee;font-weight:normal;">Сетевое окружение</div>
<svg style="left:178px;top:398px" width="16" height="16" viewBox="0 0 16 16"><path d="M1 3 H6 L7 2 H13 V14 H1Z" fill="#f0c850" stroke="#b08a30" stroke-width=".8"/><rect x="3" y="6" width="12" height="9" fill="#fff" stroke="#667" stroke-width=".8"/><rect x="4.5" y="8" width="2" height="5" fill="#e04040"/><rect x="7.5" y="8" width="2" height="5" fill="#30a040"/><rect x="10.5" y="8" width="2" height="5" fill="#3060d0"/><rect x="12.5" y="8" width="1.5" height="5" fill="#e0a020"/></svg>
<svg style="left:178px;top:430px" width="16" height="16" viewBox="0 0 16 16"><rect x="2" y="2" width="9" height="12" fill="#d8e4f4" stroke="#6a80a0" stroke-width=".8"/><rect x="3" y="3" width="7" height="3" fill="#3a8ae0"/><rect x="3" y="8" width="2" height="5" fill="#40b040"/><circle cx="11" cy="11" r="4.5" fill="#d8d8f0" stroke="#8888b0" stroke-width=".8"/><circle cx="11" cy="11" r="1.2" fill="#fff"/></svg>
<svg style="left:178px;top:462px" width="16" height="16" viewBox="0 0 16 16"><line x1="2" y1="15" x2="6.5" y2="10.5" stroke="#e08a28" stroke-width="2.5" stroke-linecap="round"/><circle cx="10" cy="6" r="5" fill="#e0f4ff" stroke="#9ab8d0" stroke-width="1.2"/><circle cx="9" cy="5" r="2" fill="#fff"/></svg>
<svg style="left:178px;top:532px" width="16" height="16" viewBox="0 0 16 16"><rect x="0.5" y="3.5" width="11" height="8" fill="#fff" stroke="#333" stroke-width="1"/><rect x="2" y="5" width="8" height="5" fill="#1a2ab8"/><path d="M12 1 H15 M13.5 1 V15 M12 15 H15" stroke="#555" stroke-width="1.2"/></svg>
<svg style="left:178px;top:552px" width="16" height="16" viewBox="0 0 16 16"><path d="M1 4 H6 L7 3 H12 V13 H1Z" fill="#f0c850" stroke="#b08a30" stroke-width=".8"/><rect x="3" y="1" width="7" height="6" fill="#e8f0ff" stroke="#8899bb" stroke-width=".6"/><path d="M6 11 H11 V8 L15.5 12 L11 16 V13 H6Z" fill="#30b030" stroke="#1a7a1a" stroke-width=".6"/></svg>
<svg style="left:178px;top:572px" width="16" height="16" viewBox="0 0 16 16"><path d="M1.5 1.5 H8 L10 3.5 V12 H1.5Z" fill="#e8f0ff" stroke="#5a78b0" stroke-width=".8"/><path d="M5.5 4.5 H12 L14.5 7 V15.5 H5.5Z" fill="#fff" stroke="#3a5aa0" stroke-width=".8"/><path d="M7 8 H13 M7 10 H13 M7 12 H13 M7 14 H12" stroke="#6a8ad0" stroke-width=".8"/></svg>
<svg style="left:178px;top:592px" width="16" height="16" viewBox="0 0 16 16"><circle cx="8" cy="8" r="7.2" fill="#2a70d0"/><path d="M3 5 Q6 2 9 4 Q8 8 4 9Z M10 10 Q13 8 14 11 Q11 15 9 13Z" fill="#3aa040"/><path d="M8 6 L13 11 H10 V16 H6 V11 H3Z" fill="#30c030" stroke="#0a6a0a" stroke-width=".7"/></svg>
<svg style="left:178px;top:612px" width="16" height="16" viewBox="0 0 16 16"><rect x="1" y="4" width="14" height="10" fill="#e8eaff" stroke="#7a80c0" stroke-width=".8"/><path d="M1 4 L8 10 L15 4" stroke="#7a80c0" fill="#f8f0d8" stroke-width=".8"/><rect x="4" y="1.5" width="8" height="5" fill="#f4e0b0" stroke="#c0a060" stroke-width=".6"/></svg>
<svg style="left:178px;top:644px" width="16" height="16" viewBox="0 0 16 16"><rect x="4" y="1" width="8" height="6" fill="#fff" stroke="#888" stroke-width=".8"/><path d="M1 7 H15 L14 14 H2Z" fill="#b8b8b8" stroke="#666" stroke-width=".8"/><rect x="3" y="11" width="10" height="2" fill="#e8e8e8"/></svg>
<svg style="left:178px;top:664px" width="16" height="16" viewBox="0 0 16 16"><path d="M2 2 L14 14 M14 2 L2 14" stroke="#d01818" stroke-width="2.6" stroke-linecap="round"/></svg>
<svg style="left:178px;top:734px" width="16" height="16" viewBox="0 0 16 16"><rect x="1" y="1" width="14" height="10" rx="1" fill="#5a6af8" stroke="#d8d8e8" stroke-width="1"/><path d="M3 8 L10 3 L13 6" stroke="#8a9aff" fill="none"/><circle cx="9" cy="5" r="1.2" fill="#fff"/><path d="M3 16 Q3 12 8 12 Q13 12 13 16Z" fill="#eee"/></svg>
<svg style="left:178px;top:754px" width="16" height="16" viewBox="0 0 16 16"><path d="M2 3 L9 1 L11 3 V15 L2 15Z" fill="#f0d080" stroke="#b89040" stroke-width=".8"/><path d="M5 3 L9 2 V14 L5 14Z" fill="#fff"/><path d="M11 4 L14 6 V15 H11Z" fill="#e0b050" stroke="#b89040" stroke-width=".6"/></svg>
<svg style="left:178px;top:774px" width="16" height="16" viewBox="0 0 16 16"><path d="M1 3 H6 L7 2 H14 V13 H1Z" fill="#e8b838" stroke="#a07820" stroke-width=".8"/><path d="M0.5 14 L2.5 6 H15.5 L13.5 14Z" fill="#fbe07a" stroke="#a07820" stroke-width=".8"/></svg>
<svg style="left:178px;top:794px" width="16" height="16" viewBox="0 0 16 16"><circle cx="8" cy="8" r="7" fill="#3a7ae0"/><path d="M2 6 Q5 2 9 3 Q10 7 5 9Z M9 10 Q13 8 15 10 Q13 14 10 14Z" fill="#f0d040"/><ellipse cx="8" cy="4" rx="5" ry="2.5" fill="#fff" opacity=".45"/></svg>
<div class="a" style="left:375px;top:357px;width:21px;height:461px;background:linear-gradient(90deg,#e9e9e9,#f4f4f4 40%,#efefef);border-left:1px solid #d8d8d8"></div>
<svg style="left:382px;top:364px" width="8" height="5"><path d="M0 5 L4 0 L8 5Z" fill="#606060"/></svg>
<div class="a" style="left:377px;top:379px;width:18px;height:386px;border:1px solid #a4a4a4;border-radius:2px;background:linear-gradient(90deg,#f6f6f6 0%,#e6e6e6 45%,#d2d2d2 55%,#c8c8c8 100%)"></div>
<svg style="left:381px;top:568px" width="9" height="8"><path d="M0 0.5 H8 M0 3.5 H8 M0 6.5 H8" stroke="#555"/></svg>
<svg style="left:382px;top:806px" width="8" height="5"><path d="M0 0 L4 5 L8 0Z" fill="#606060"/></svg>
<div class="a" style="left:396px;top:357px;width:562px;height:461px;background:#fff;overflow:hidden">
<div class="a" style="left:0;top:0;width:562px;height:19px;background:linear-gradient(180deg,#ffffff 0%,#f6f7f9 50%,#eef0f3 100%);border-bottom:1px solid #d5d5d5"></div>
<div class="a" style="left:270px;top:0;width:1px;height:19px;background:#dedede"></div>
<div class="a" style="left:413px;top:0;width:1px;height:19px;background:#dedede"></div>
<div class="a" style="left:1px;top:20px;width:269px;height:421px;background:#f7f7f7"></div>
</div>
<div class="t" style="left:409px;top:359.82px;font-size:16px;color:#000;font-weight:normal;">Имя</div>
<svg style="left:449px;top:364px" width="9" height="5"><path d="M0 5 L4.5 0 L9 5Z" fill="#a8a8a8"/></svg>
<div class="t" style="left:747px;top:359.82px;font-size:16px;color:#000;font-weight:normal;">Размер</div>
<div class="t" style="left:819px;top:359.82px;font-size:16px;color:#000;font-weight:normal;">Тип</div>
<svg style="left:400px;top:380px" width="16" height="13"><use href="#folder" width="16" height="13"/></svg>
<div class="t" style="left:418px;top:378.08px;font-size:16.3px;color:#000;font-weight:normal;text-decoration:underline;text-underline-offset:2px;text-decoration-thickness:1px;">Program Files</div>
<div class="a" style="left:816px;top:377px;width:122px;height:20px;overflow:hidden"><div class="t" style="left:0;top:1.12px;font-size:16px;color:#000">Папка с файлами</div></div>
<svg style="left:400px;top:400px" width="16" height="13"><use href="#folderP" width="16" height="13"/></svg>
<div class="t" style="left:418px;top:398.08px;font-size:16.3px;color:#000;font-weight:normal;text-decoration:underline;text-underline-offset:2px;text-decoration-thickness:1px;">RECYCLER</div>
<div class="a" style="left:816px;top:397px;width:122px;height:20px;overflow:hidden"><div class="t" style="left:0;top:1.12px;font-size:16px;color:#000">Папка с файлами</div></div>
<svg style="left:400px;top:420px" width="16" height="13"><use href="#folderP" width="16" height="13"/></svg>
<div class="t" style="left:418px;top:418.08px;font-size:16.3px;color:#000;font-weight:normal;text-decoration:underline;text-underline-offset:2px;text-decoration-thickness:1px;">System Volume Information</div>
<div class="a" style="left:816px;top:417px;width:122px;height:20px;overflow:hidden"><div class="t" style="left:0;top:1.12px;font-size:16px;color:#000">Папка с файлами</div></div>
<svg style="left:400px;top:440px" width="16" height="13"><use href="#folder" width="16" height="13"/></svg>
<div class="t" style="left:418px;top:438.08px;font-size:16.3px;color:#000;font-weight:normal;text-decoration:underline;text-underline-offset:2px;text-decoration-thickness:1px;">temp</div>
<div class="a" style="left:816px;top:437px;width:122px;height:20px;overflow:hidden"><div class="t" style="left:0;top:1.12px;font-size:16px;color:#000">Папка с файлами</div></div>
<svg style="left:400px;top:460px" width="16" height="13"><use href="#folder" width="16" height="13"/></svg>
<div class="t" style="left:418px;top:458.08px;font-size:16.3px;color:#000;font-weight:normal;text-decoration:underline;text-underline-offset:2px;text-decoration-thickness:1px;">totalcmd</div>
<div class="a" style="left:816px;top:457px;width:122px;height:20px;overflow:hidden"><div class="t" style="left:0;top:1.12px;font-size:16px;color:#000">Папка с файлами</div></div>
<svg style="left:400px;top:480px" width="16" height="13"><use href="#folder" width="16" height="13"/></svg>
<div class="t" style="left:418px;top:478.08px;font-size:16.3px;color:#000;font-weight:normal;text-decoration:underline;text-underline-offset:2px;text-decoration-thickness:1px;">WINDOWS</div>
<div class="a" style="left:816px;top:477px;width:122px;height:20px;overflow:hidden"><div class="t" style="left:0;top:1.12px;font-size:16px;color:#000">Папка с файлами</div></div>
<svg style="left:400px;top:497px" width="16" height="16"><use href="#bat" width="16" height="16"/></svg>
<div class="t" style="left:418px;top:498.08px;font-size:16.3px;color:#000;font-weight:normal;text-decoration:underline;text-underline-offset:2px;text-decoration-thickness:1px;">AUTOEXEC.BAT</div>
<div class="t" style="right:1116px;top:498.12px;font-size:16px;color:#000">0 КБ</div>
<div class="a" style="left:816px;top:497px;width:122px;height:20px;overflow:hidden"><div class="t" style="left:0;top:1.12px;font-size:16px;color:#000">Пакетный файл MS-DOS</div></div>
<svg style="left:400px;top:517px" width="16" height="16"><use href="#ini" width="16" height="16"/></svg>
<div class="t" style="left:418px;top:518.08px;font-size:16.3px;color:#000;font-weight:normal;text-decoration:underline;text-underline-offset:2px;text-decoration-thickness:1px;">boot.ini</div>
<div class="t" style="right:1116px;top:518.12px;font-size:16px;color:#000">1 КБ</div>
<div class="a" style="left:816px;top:517px;width:122px;height:20px;overflow:hidden"><div class="t" style="left:0;top:1.12px;font-size:16px;color:#000">Параметры конфигурации</div></div>
<svg style="left:400px;top:537px" width="16" height="16"><use href="#sysP" width="16" height="16"/></svg>
<div class="t" style="left:418px;top:538.08px;font-size:16.3px;color:#000;font-weight:normal;text-decoration:underline;text-underline-offset:2px;text-decoration-thickness:1px;">Bootfont.bin</div>
<div class="t" style="right:1116px;top:538.12px;font-size:16px;color:#000">5 КБ</div>
<div class="a" style="left:816px;top:537px;width:122px;height:20px;overflow:hidden"><div class="t" style="left:0;top:1.12px;font-size:16px;color:#000">Файл &quot;BIN&quot;</div></div>
<svg style="left:400px;top:557px" width="16" height="16"><use href="#sys" width="16" height="16"/></svg>
<div class="t" style="left:418px;top:558.08px;font-size:16.3px;color:#000;font-weight:normal;text-decoration:underline;text-underline-offset:2px;text-decoration-thickness:1px;">config.bin</div>
<div class="t" style="right:1116px;top:558.12px;font-size:16px;color:#000">65 КБ</div>
<div class="a" style="left:816px;top:557px;width:122px;height:20px;overflow:hidden"><div class="t" style="left:0;top:1.12px;font-size:16px;color:#000">Файл &quot;BIN&quot;</div></div>
<svg style="left:400px;top:577px" width="16" height="16"><use href="#sysP" width="16" height="16"/></svg>
<div class="t" style="left:418px;top:578.08px;font-size:16.3px;color:#000;font-weight:normal;text-decoration:underline;text-underline-offset:2px;text-decoration-thickness:1px;">CONFIG.SYS</div>
<div class="t" style="right:1116px;top:578.12px;font-size:16px;color:#000">0 КБ</div>
<div class="a" style="left:816px;top:577px;width:122px;height:20px;overflow:hidden"><div class="t" style="left:0;top:1.12px;font-size:16px;color:#000">Системный файл</div></div>
<svg style="left:400px;top:597px" width="16" height="16"><use href="#txt" width="16" height="16"/></svg>
<div class="t" style="left:418px;top:598.08px;font-size:16.3px;color:#000;font-weight:normal;text-decoration:underline;text-underline-offset:2px;text-decoration-thickness:1px;">config.txt</div>
<div class="t" style="right:1116px;top:598.12px;font-size:16px;color:#000">1 КБ</div>
<div class="a" style="left:816px;top:597px;width:122px;height:20px;overflow:hidden"><div class="t" style="left:0;top:1.12px;font-size:16px;color:#000">Текстовый документ</div></div>
<svg style="left:400px;top:617px" width="16" height="16"><use href="#dat" width="16" height="16"/></svg>
<div class="t" style="left:418px;top:618.08px;font-size:16.3px;color:#000;font-weight:normal;text-decoration:underline;text-underline-offset:2px;text-decoration-thickness:1px;">DefaultColors.dat</div>
<div class="t" style="right:1116px;top:618.12px;font-size:16px;color:#000">1 КБ</div>
<div class="a" style="left:816px;top:617px;width:122px;height:20px;overflow:hidden"><div class="t" style="left:0;top:1.12px;font-size:16px;color:#000">KMP - MPEG Movie</div></div>
<svg style="left:400px;top:637px" width="16" height="16"><use href="#dat" width="16" height="16"/></svg>
<div class="t" style="left:418px;top:638.08px;font-size:16.3px;color:#000;font-weight:normal;text-decoration:underline;text-underline-offset:2px;text-decoration-thickness:1px;">DefaultColumns.dat</div>
<div class="t" style="right:1116px;top:638.12px;font-size:16px;color:#000">1 КБ</div>
<div class="a" style="left:816px;top:637px;width:122px;height:20px;overflow:hidden"><div class="t" style="left:0;top:1.12px;font-size:16px;color:#000">KMP - MPEG Movie</div></div>
<svg style="left:400px;top:657px" width="16" height="16"><use href="#dat" width="16" height="16"/></svg>
<div class="t" style="left:418px;top:658.08px;font-size:16.3px;color:#000;font-weight:normal;text-decoration:underline;text-underline-offset:2px;text-decoration-thickness:1px;">DefaultOptions.dat</div>
<div class="t" style="right:1116px;top:658.12px;font-size:16px;color:#000">1 КБ</div>
<div class="a" style="left:816px;top:657px;width:122px;height:20px;overflow:hidden"><div class="t" style="left:0;top:1.12px;font-size:16px;color:#000">KMP - MPEG Movie</div></div>
<svg style="left:400px;top:677px" width="16" height="16"><use href="#dat" width="16" height="16"/></svg>
<div class="t" style="left:418px;top:678.08px;font-size:16.3px;color:#000;font-weight:normal;text-decoration:underline;text-underline-offset:2px;text-decoration-thickness:1px;">Disclaimed.dat</div>
<div class="t" style="right:1116px;top:678.12px;font-size:16px;color:#000">1 КБ</div>
<div class="a" style="left:816px;top:677px;width:122px;height:20px;overflow:hidden"><div class="t" style="left:0;top:1.12px;font-size:16px;color:#000">KMP - MPEG Movie</div></div>
<svg style="left:400px;top:697px" width="16" height="16"><use href="#sys" width="16" height="16"/></svg>
<div class="t" style="left:418px;top:698.08px;font-size:16.3px;color:#000;font-weight:normal;text-decoration:underline;text-underline-offset:2px;text-decoration-thickness:1px;">END</div>
<div class="t" style="right:1116px;top:698.12px;font-size:16px;color:#000">1 КБ</div>
<div class="a" style="left:816px;top:697px;width:122px;height:20px;overflow:hidden"><div class="t" style="left:0;top:1.12px;font-size:16px;color:#000">Файл</div></div>
<svg style="left:400px;top:717px" width="16" height="16"><use href="#dat" width="16" height="16"/></svg>
<div class="t" style="left:418px;top:718.08px;font-size:16.3px;color:#000;font-weight:normal;text-decoration:underline;text-underline-offset:2px;text-decoration-thickness:1px;">highscores.dat</div>
<div class="t" style="right:1116px;top:718.12px;font-size:16px;color:#000">1 КБ</div>
<div class="a" style="left:816px;top:717px;width:122px;height:20px;overflow:hidden"><div class="t" style="left:0;top:1.12px;font-size:16px;color:#000">KMP - MPEG Movie</div></div>
<svg style="left:400px;top:737px" width="16" height="16"><use href="#dat" width="16" height="16"/></svg>
<div class="t" style="left:418px;top:738.08px;font-size:16.3px;color:#000;font-weight:normal;text-decoration:underline;text-underline-offset:2px;text-decoration-thickness:1px;">ignorelist.dat</div>
<div class="t" style="right:1116px;top:738.12px;font-size:16px;color:#000">1 КБ</div>
<div class="a" style="left:816px;top:737px;width:122px;height:20px;overflow:hidden"><div class="t" style="left:0;top:1.12px;font-size:16px;color:#000">KMP - MPEG Movie</div></div>
<svg style="left:400px;top:757px" width="16" height="16"><use href="#sysP" width="16" height="16"/></svg>
<div class="t" style="left:418px;top:758.08px;font-size:16.3px;color:#000;font-weight:normal;text-decoration:underline;text-underline-offset:2px;text-decoration-thickness:1px;">IO.SYS</div>
<div class="t" style="right:1116px;top:758.12px;font-size:16px;color:#000">0 КБ</div>
<div class="a" style="left:816px;top:757px;width:122px;height:20px;overflow:hidden"><div class="t" style="left:0;top:1.12px;font-size:16px;color:#000">Системный файл</div></div>
<svg style="left:400px;top:777px" width="16" height="16"><use href="#txt" width="16" height="16"/></svg>
<div class="t" style="left:418px;top:778.08px;font-size:16.3px;color:#000;font-weight:normal;text-decoration:underline;text-underline-offset:2px;text-decoration-thickness:1px;">level_001.log</div>
<div class="t" style="right:1116px;top:778.12px;font-size:16px;color:#000">1 КБ</div>
<div class="a" style="left:816px;top:777px;width:122px;height:20px;overflow:hidden"><div class="t" style="left:0;top:1.12px;font-size:16px;color:#000">Текстовый документ</div></div>
<div class="a" style="left:938px;top:376px;width:20px;height:422px;background:linear-gradient(90deg,#ececec,#f6f6f6)"></div>
<svg style="left:944px;top:784px" width="8" height="5"><path d="M0 0 L4 5 L8 0Z" fill="#606060"/></svg>
<div class="a" style="left:396px;top:798px;width:562px;height:20px;background:linear-gradient(180deg,#e8e8e8,#f4f4f4)"></div>
<svg style="left:404px;top:805px" width="5" height="8"><path d="M5 0 L0 4 L5 8Z" fill="#606060"/></svg>
<div class="a" style="left:418px;top:799px;width:348px;height:18px;border:1px solid #a4a4a4;border-radius:2px;background:linear-gradient(180deg,#f6f6f6 0%,#e6e6e6 45%,#d2d2d2 55%,#c8c8c8 100%)"></div>
<svg style="left:587px;top:803px" width="8" height="9"><path d="M0.5 0 V9 M3.5 0 V9 M6.5 0 V9" stroke="#555"/></svg>
<svg style="left:925px;top:805px" width="5" height="8"><path d="M0 0 L5 4 L0 8Z" fill="#606060"/></svg>
<div class="a" style="left:938px;top:798px;width:20px;height:20px;background:#f0f0f0"></div>
<svg style="left:942px;top:804px" width="14" height="12"><g fill="#a8a8a8"><rect x="10" y="0" width="2" height="2"/><rect x="7" y="3" width="2" height="2"/><rect x="10" y="3" width="2" height="2"/><rect x="4" y="6" width="2" height="2"/><rect x="7" y="6" width="2" height="2"/><rect x="10" y="6" width="2" height="2"/><rect x="1" y="9" width="2" height="2"/><rect x="4" y="9" width="2" height="2"/><rect x="7" y="9" width="2" height="2"/><rect x="10" y="9" width="2" height="2"/></g></svg>
<div class="a" style="left:909px;top:229px;width:417px;height:547px;border:1px solid #3c4652;border-radius:6px 6px 1px 1px;background:linear-gradient(90deg,rgba(255,255,255,.05) 0%,rgba(255,255,255,.2) 15%,rgba(255,255,255,0) 30%,rgba(255,255,255,.18) 50%,rgba(255,255,255,0) 65%,rgba(255,255,255,.15) 85%,rgba(255,255,255,0) 100%),linear-gradient(180deg,#d2dce6 0%,#c6d2de 100%);"></div>
<div class="t" style="left:914px;top:231.00px;font-size:17px;color:#aca59e;font-weight:normal;text-shadow:0 0 6px #fff,0 0 3px #fff;">Свойства системы</div>
<div class="a" style="left:1229px;top:229px;width:25px;height:14px;border:1px solid #8c96a2;border-top:none;border-radius:0 0 4px 4px;background:linear-gradient(#e4eaf0,#cfd8e2)"></div>
<div class="t" style="left:1237px;top:228.09px;font-size:12px;color:#444;font-weight:bold;text-shadow:0 0 1px #fff">?</div>
<div class="a" style="left:1271px;top:229px;width:43px;height:14px;border:1px solid #8c96a2;border-top:none;border-radius:0 0 4px 4px;background:linear-gradient(#e4eaf0,#cfd8e2)"></div>
<svg style="left:1286px;top:231px" width="13" height="10"><path d="M2 1 L11 9 M11 1 L2 9" stroke="#555" stroke-width="2.6"/><path d="M2 1 L11 9 M11 1 L2 9" stroke="#f0f0f0" stroke-width="1.2"/></svg>
<div class="a" style="left:910px;top:255px;width:415px;height:520px;background:#f0f0f0;border-top:1px solid #8a929c"></div>
<div class="a" style="left:919px;top:265px;width:102px;height:18px;border:1px solid #898c95;border-bottom:none;border-radius:2px 2px 0 0;background:linear-gradient(180deg,#f3f3f3 0%,#ebebeb 45%,#dcdcdc 55%,#cfcfcf 100%)"></div><div class="t" style="left:919px;width:102px;text-align:center;top:269.2px;font-size:11px;color:#000">Общие</div>
<div class="a" style="left:1021px;top:265px;width:155px;height:18px;border:1px solid #898c95;border-bottom:none;border-radius:2px 2px 0 0;background:linear-gradient(180deg,#f3f3f3 0%,#ebebeb 45%,#dcdcdc 55%,#cfcfcf 100%)"></div><div class="t" style="left:1021px;width:155px;text-align:center;top:269.2px;font-size:11px;color:#000">Имя компьютера</div>
<div class="a" style="left:1176px;top:265px;width:140px;height:18px;border:1px solid #898c95;border-bottom:none;border-radius:2px 2px 0 0;background:linear-gradient(180deg,#f3f3f3 0%,#ebebeb 45%,#dcdcdc 55%,#cfcfcf 100%)"></div><div class="t" style="left:1176px;width:140px;text-align:center;top:269.2px;font-size:11px;color:#000">Оборудование</div>
<div class="a" style="left:1024px;top:284px;width:169px;height:18px;border:1px solid #898c95;border-bottom:none;border-radius:2px 2px 0 0;background:linear-gradient(180deg,#f3f3f3 0%,#ebebeb 45%,#dcdcdc 55%,#cfcfcf 100%)"></div><div class="t" style="left:1024px;width:169px;text-align:center;top:287.2px;font-size:11px;color:#000">Автоматическое обновление</div>
<div class="a" style="left:1193px;top:284px;width:123px;height:18px;border:1px solid #898c95;border-bottom:none;border-radius:2px 2px 0 0;background:linear-gradient(180deg,#f3f3f3 0%,#ebebeb 45%,#dcdcdc 55%,#cfcfcf 100%)"></div><div class="t" style="left:1193px;width:123px;text-align:center;top:287.2px;font-size:11px;color:#000">Удаленные сеансы</div>
<div class="a" style="left:917px;top:301px;width:401px;height:436px;background:#fcfcfc;border:1px solid #898c95"></div>
<div class="a" style="left:917px;top:282px;width:108px;height:21px;background:#fcfcfc;border:1px solid #898c95;border-bottom:none;border-radius:2px 2px 0 0"></div>
<div class="t" style="left:930px;top:285.21px;font-size:11px;color:#000;font-weight:normal;">Дополнительно</div>
<div class="t" style="left:936.5px;top:317.01px;font-size:11px;color:#000;font-weight:normal;">Необходимо иметь права администратора для изменения</div>
<div class="t" style="left:936.5px;top:330.21px;font-size:11px;color:#000;font-weight:normal;">большинства перечисленных параметров.</div>
<div class="a" style="left:933px;top:360px;width:361px;height:76px;border:1px solid #d5dfe5;border-radius:3px"></div><div class="t" style="left:938px;top:353.7px;font-size:11px;color:#000;background:#fcfcfc;padding:0 3px">Быстродействие</div>
<div class="t" style="left:942px;top:373.01px;font-size:11px;color:#000;font-weight:normal;">Визуальные эффекты, использование процессора, оперативной и</div>
<div class="t" style="left:942px;top:386.21px;font-size:11px;color:#000;font-weight:normal;">виртуальной памяти</div>
<div class="a" style="left:1212px;top:405px;width:72px;height:21px;border:1px solid #707070;border-radius:3px;background:linear-gradient(180deg,#f2f2f2 0%,#ebebeb 48%,#dddddd 52%,#cfcfcf 100%);box-shadow:inset 0 0 0 1px #fcfcfc;"></div><div class="t" style="left:1212px;width:72px;text-align:center;top:409.5px;font-size:11px;color:#000">Параметры</div>
<div class="a" style="left:933px;top:451px;width:361px;height:77px;border:1px solid #d5dfe5;border-radius:3px"></div><div class="t" style="left:938px;top:445.7px;font-size:11px;color:#000;background:#fcfcfc;padding:0 3px">Профили пользователей</div>
<div class="t" style="left:942px;top:466.31px;font-size:11px;color:#000;font-weight:normal;">Параметры рабочего стола, относящиеся ко входу в систему</div>
<div class="a" style="left:1212px;top:498px;width:72px;height:20px;border:1px solid #707070;border-radius:3px;background:linear-gradient(180deg,#f2f2f2 0%,#ebebeb 48%,#dddddd 52%,#cfcfcf 100%);box-shadow:inset 0 0 0 1px #fcfcfc;"></div><div class="t" style="left:1212px;width:72px;text-align:center;top:502.0px;font-size:11px;color:#000">Параметры</div>
<div class="a" style="left:933px;top:544px;width:361px;height:77px;border:1px solid #d5dfe5;border-radius:3px"></div><div class="t" style="left:938px;top:538.7px;font-size:11px;color:#000;background:#fcfcfc;padding:0 3px">Загрузка и восстановление</div>
<div class="t" style="left:942px;top:559.11px;font-size:11px;color:#000;font-weight:normal;">Загрузка и восстановление системы, отладочная информация</div>
<div class="a" style="left:1212px;top:590px;width:72px;height:21px;border:1px solid #707070;border-radius:3px;background:linear-gradient(180deg,#f2f2f2 0%,#ebebeb 48%,#dddddd 52%,#cfcfcf 100%);box-shadow:inset 0 0 0 1px #fcfcfc;"></div><div class="t" style="left:1212px;width:72px;text-align:center;top:594.5px;font-size:11px;color:#000">Параметры</div>
<div class="a" style="left:1035px;top:636px;width:126px;height:21px;border:1px solid #707070;border-radius:3px;background:linear-gradient(180deg,#f2f2f2 0%,#ebebeb 48%,#dddddd 52%,#cfcfcf 100%);box-shadow:inset 0 0 0 1px #fcfcfc;"></div><div class="t" style="left:1035px;width:126px;text-align:center;top:640.5px;font-size:11px;color:#000">Переменные среды</div>
<div class="a" style="left:1168px;top:636px;width:126px;height:21px;border:1px solid #707070;border-radius:3px;background:linear-gradient(180deg,#f2f2f2 0%,#ebebeb 48%,#dddddd 52%,#cfcfcf 100%);box-shadow:inset 0 0 0 1px #fcfcfc;"></div><div class="t" style="left:1168px;width:126px;text-align:center;top:640.5px;font-size:11px;color:#000">Отчет об ошибках</div>
<div class="a" style="left:1082px;top:745px;width:73px;height:21px;border:1px solid #707070;border-radius:3px;background:linear-gradient(180deg,#f2f2f2 0%,#ebebeb 48%,#dddddd 52%,#cfcfcf 100%);box-shadow:inset 0 0 0 1px #fcfcfc;"></div><div class="t" style="left:1082px;width:73px;text-align:center;top:749.5px;font-size:11px;color:#000">OK</div>
<div class="a" style="left:1163px;top:745px;width:73px;height:21px;border:1px solid #707070;border-radius:3px;background:linear-gradient(180deg,#f2f2f2 0%,#ebebeb 48%,#dddddd 52%,#cfcfcf 100%);box-shadow:inset 0 0 0 1px #fcfcfc;"></div><div class="t" style="left:1163px;width:73px;text-align:center;top:749.5px;font-size:11px;color:#000">Отмена</div>
<div class="a" style="left:1244px;top:745px;width:73px;height:21px;border:1px solid #b8b8b8;border-radius:3px;background:linear-gradient(180deg,#f2f2f2 0%,#ebebeb 48%,#dddddd 52%,#cfcfcf 100%);box-shadow:inset 0 0 0 1px #fcfcfc;"></div><div class="t" style="left:1244px;width:73px;text-align:center;top:749.5px;font-size:11px;color:#a0a0a0">Применить</div>
<div class="a" style="left:1345px;top:80px;width:383px;height:462px;border:1px solid #1c2a3a;border-radius:6px 6px 1px 1px;background:linear-gradient(90deg,rgba(255,255,255,.1) 0%,rgba(255,255,255,.35) 30%,rgba(255,255,255,.05) 50%,rgba(255,255,255,.3) 75%,rgba(255,255,255,.05) 100%),linear-gradient(180deg,#bed2e6 0%,#b0c6de 100%)"></div>
<div class="t" style="left:1351px;top:82.84px;font-size:16.7px;color:#000;font-weight:normal;text-shadow:0 0 8px #fff,0 0 4px #fff;">Загрузка и восстановление</div>
<div class="a" style="left:1630px;top:80px;width:25px;height:14px;border:1px solid #6c7886;border-top:none;border-radius:0 0 4px 4px;background:linear-gradient(#dfe8f2,#b8c8da)"></div>
<div class="t" style="left:1638px;top:79.09px;font-size:12px;color:#444;font-weight:bold;text-shadow:0 0 1px #fff">?</div>
<div class="a" style="left:1672px;top:80px;width:43px;height:14px;border:1px solid #6a2a20;border-top:none;border-radius:0 0 4px 4px;background:linear-gradient(#e8a89a 0%,#d05a40 50%,#b83a20 100%)"></div>
<svg style="left:1687px;top:82px" width="13" height="10"><path d="M2 1 L11 9 M11 1 L2 9" stroke="#5a1a10" stroke-width="2.8"/><path d="M2 1 L11 9 M11 1 L2 9" stroke="#fff" stroke-width="1.4"/></svg>
<div class="a" style="left:1346px;top:106px;width:381px;height:435px;border-right:1px solid #30d0f8;border-bottom:1px solid #30d0f8"></div>
<div class="a" style="left:1346px;top:106px;width:380px;height:434px;background:#f3f3f3;border:1px solid #7a8694"></div>
<div class="a" style="left:1359px;top:125px;width:355px;height:137px;border:1px solid #d5dfe5;border-radius:3px"></div><div class="t" style="left:1364px;top:120.2px;font-size:11px;color:#000;background:#f3f3f3;padding:0 3px">Загрузка операционной системы</div>
<div class="t" style="left:1367.5px;top:140.51px;font-size:11px;color:#000;font-weight:normal;">Операционная система, загружаемая по умолчанию:</div>
<div class="a" style="left:1368px;top:156px;width:336px;height:21px;background:#fff;border:1px solid #a8a8a8;border-top-color:#707070"></div>
<div class="a" style="left:1371px;top:159px;width:309px;height:15px;background:#133d6e;overflow:hidden"><div class="t" style="left:1px;top:1.7px;font-size:11px;color:#fff">"Microsoft Windows XP Professional RU" /execute /fastdetect /usepmtimer</div></div>
<svg style="left:1688px;top:165px" width="9" height="5"><path d="M0 0 H8 L4 4.5Z" fill="#0c1a60"/></svg>
<div class="a" style="left:1368px;top:187px;width:13px;height:13px;border:1px solid #8e8f8f;background:linear-gradient(135deg,#dcdcdc,#fafafa)"></div><svg style="left:1368px;top:187px" width="13" height="13"><path d="M3 6.5 L5.5 10 L10 2" stroke="#4a5aa8" stroke-width="1.8" fill="none"/></svg>
<div class="t" style="left:1384px;top:188.71px;font-size:11px;color:#000;font-weight:normal;">Отображать список операционных систем:</div>
<div class="a" style="left:1368px;top:211px;width:13px;height:13px;border:1px solid #8e8f8f;background:linear-gradient(135deg,#dcdcdc,#fafafa)"></div><svg style="left:1368px;top:211px" width="13" height="13"><path d="M3 6.5 L5.5 10 L10 2" stroke="#4a5aa8" stroke-width="1.8" fill="none"/></svg>
<div class="t" style="left:1384px;top:212.71px;font-size:11px;color:#000;font-weight:normal;">Отображать варианты восстановления:</div>
<div class="a" style="left:1616px;top:183px;width:50px;height:20px;background:#fff;border:1px solid #a8a8a8"></div><div class="t" style="left:1623px;top:187.5px;font-size:11px">30</div><div class="a" style="left:1645px;top:185px;width:18px;height:8px;border:1px solid #b0b0b0;background:linear-gradient(#f6f6f6,#dedede)"></div><div class="a" style="left:1645px;top:193px;width:18px;height:8px;border:1px solid #b0b0b0;background:linear-gradient(#f6f6f6,#dedede)"></div><svg style="left:1651px;top:187px" width="7" height="4"><path d="M0 4 L3.5 0 L7 4Z" fill="#4a5aa8"/></svg><svg style="left:1651px;top:195px" width="7" height="4"><path d="M0 0 L3.5 4 L7 0Z" fill="#4a5aa8"/></svg>
<div class="t" style="left:1669.5px;top:187.71px;font-size:11px;color:#000;font-weight:normal;">сек.</div>
<div class="a" style="left:1616px;top:208px;width:50px;height:20px;background:#fff;border:1px solid #a8a8a8"></div><div class="t" style="left:1623px;top:212.5px;font-size:11px">30</div><div class="a" style="left:1645px;top:210px;width:18px;height:8px;border:1px solid #b0b0b0;background:linear-gradient(#f6f6f6,#dedede)"></div><div class="a" style="left:1645px;top:218px;width:18px;height:8px;border:1px solid #b0b0b0;background:linear-gradient(#f6f6f6,#dedede)"></div><svg style="left:1651px;top:212px" width="7" height="4"><path d="M0 4 L3.5 0 L7 4Z" fill="#4a5aa8"/></svg><svg style="left:1651px;top:220px" width="7" height="4"><path d="M0 0 L3.5 4 L7 0Z" fill="#4a5aa8"/></svg>
<div class="t" style="left:1669.5px;top:210.71px;font-size:11px;color:#000;font-weight:normal;">сек.</div>
<div class="t" style="left:1367.5px;top:238.71px;font-size:11px;color:#000;font-weight:normal;">Отредактировать список загрузки вручную:</div>
<div class="a" style="left:1630px;top:235px;width:73px;height:21px;border:1px solid #707070;border-radius:3px;background:linear-gradient(180deg,#f2f2f2 0%,#ebebeb 48%,#dddddd 52%,#cfcfcf 100%);box-shadow:inset 0 0 0 1px #fcfcfc;"></div><div class="t" style="left:1630px;width:73px;text-align:center;top:239.5px;font-size:11px;color:#000">Правка</div>
<div class="a" style="left:1359px;top:278px;width:355px;height:220px;border:1px solid #d5dfe5;border-radius:3px"></div><div class="t" style="left:1364px;top:273.7px;font-size:11px;color:#000;background:#f3f3f3;padding:0 3px">Отказ системы</div>
<div class="a" style="left:1368px;top:293px;width:13px;height:13px;border:1px solid #8e8f8f;background:linear-gradient(135deg,#dcdcdc,#fafafa)"></div><svg style="left:1368px;top:293px" width="13" height="13"><path d="M3 6.5 L5.5 10 L10 2" stroke="#4a5aa8" stroke-width="1.8" fill="none"/></svg>
<div class="t" style="left:1384px;top:295.01px;font-size:11px;color:#000;font-weight:normal;">Записать событие в системный журнал</div>
<div class="a" style="left:1368px;top:316px;width:13px;height:13px;border:1px solid #8e8f8f;background:linear-gradient(135deg,#dcdcdc,#fafafa)"></div>
<div class="t" style="left:1384px;top:318.01px;font-size:11px;color:#000;font-weight:normal;">Отправить административное оповещение</div>
<div class="a" style="left:1368px;top:339px;width:13px;height:13px;border:1px solid #8e8f8f;background:linear-gradient(135deg,#dcdcdc,#fafafa)"></div>
<div class="t" style="left:1384px;top:341.01px;font-size:11px;color:#000;font-weight:normal;">Выполнить автоматическую перезагрузку</div>
<div class="a" style="left:1366px;top:368px;width:339px;height:117px;border:1px solid #d5dfe5;border-radius:3px"></div><div class="t" style="left:1371px;top:363.7px;font-size:11px;color:#000;background:#f3f3f3;padding:0 3px">Запись отладочной информации</div>
<div class="a" style="left:1379px;top:387px;width:227px;height:21px;background:#fff;border:1px solid #a8a8a8;border-top-color:#707070"></div>
<div class="t" style="left:1383px;top:392.71px;font-size:11px;color:#000;font-weight:normal;">(отсутствует)</div>
<svg style="left:1590px;top:396px" width="9" height="5"><path d="M0 0 H8 L4 4.5Z" fill="#0c1a60"/></svg>
<div class="t" style="left:1379px;top:415.71px;font-size:11px;color:#a3a3a3;font-weight:normal;">Файл дампа памяти:</div>
<div class="a" style="left:1379px;top:432px;width:230px;height:20px;background:#f0f0f0;border:1px solid #b4b4b4"></div>
<div class="t" style="left:1385px;top:436.71px;font-size:11px;color:#a3a3a3;font-weight:normal;">%SystemRoot%\MEMORY.DMP</div>
<div class="a" style="left:1380px;top:462px;width:13px;height:13px;border:1px solid #b8b8b8;background:linear-gradient(135deg,#dcdcdc,#fafafa)"></div><svg style="left:1380px;top:462px" width="13" height="13"><path d="M3 6.5 L5.5 10 L10 2" stroke="#a8b0d8" stroke-width="1.8" fill="none"/></svg>
<div class="t" style="left:1396px;top:463.71px;font-size:11px;color:#b0b0b0;font-weight:normal;">Заменять существующий файл дампа</div>
<div class="a" style="left:1560px;top:509px;width:73px;height:21px;border:1px solid #3c8ec8;border-radius:3px;background:linear-gradient(180deg,#f2f2f2 0%,#ebebeb 48%,#dddddd 52%,#cfcfcf 100%);box-shadow:inset 0 0 0 1px #6ed0f4;"></div><div class="t" style="left:1560px;width:73px;text-align:center;top:513.5px;font-size:11px;color:#000">OK</div>
<div class="a" style="left:1641px;top:509px;width:73px;height:21px;border:1px solid #707070;border-radius:3px;background:linear-gradient(180deg,#f2f2f2 0%,#ebebeb 48%,#dddddd 52%,#cfcfcf 100%);box-shadow:inset 0 0 0 1px #fcfcfc;"></div><div class="t" style="left:1641px;width:73px;text-align:center;top:513.5px;font-size:11px;color:#000">Отмена</div>
<div class="a" style="left:0;top:1031px;width:1920px;height:49px;background:linear-gradient(180deg,#1f3d64 0%,#1b385e 50%,#18345a 100%);border-top:1px solid #5a7ca4"></div>
<svg style="left:0;top:1032px" width="1920" height="48"><g fill="#fff" opacity=".05"><path d="M380 0 H420 L470 48 H430Z"/><path d="M660 0 H690 L740 48 H710Z"/><path d="M1130 0 H1160 L1210 48 H1180Z"/><path d="M1290 0 H1340 L1390 48 H1340Z"/><path d="M1540 0 H1570 L1620 48 H1590Z"/></g></svg>
<div class="a" style="left:0;top:1077px;width:1920px;height:1px;background:#4f6f98;opacity:.6"></div>
<svg style="left:17px;top:1034px" width="41" height="41" viewBox="0 0 41 41"><defs><radialGradient id="orbg" cx=".5" cy=".75" r=".7"><stop offset="0" stop-color="#4ad8ff"/><stop offset=".35" stop-color="#1a78c8"/><stop offset=".8" stop-color="#0c3a78"/><stop offset="1" stop-color="#0a2a55"/></radialGradient><linearGradient id="orbh" x1="0" y1="0" x2="0" y2="1"><stop offset="0" stop-color="#fff" stop-opacity=".7"/><stop offset="1" stop-color="#fff" stop-opacity="0"/></linearGradient></defs><circle cx="20.5" cy="20.5" r="19.5" fill="#0a1c38"/><circle cx="20.5" cy="20.5" r="18.3" fill="url(#orbg)" stroke="#6a9ac8" stroke-width="1"/><path d="M9 12.5 Q13 10.5 19.5 12 L18.5 19.5 Q13 18 8 20Z" fill="#f25022"/><path d="M21 12 Q26.5 13.5 32 11 L31 18.5 Q25.5 21 20 19.5Z" fill="#7fba00"/><path d="M8 21 Q13 19 18.3 20.5 L17.3 28 Q12 26.5 7 28.5Z" fill="#00a4ef"/><path d="M19.8 20.5 Q25 22 30.8 19.8 L29.8 27.3 Q24 29.5 18.8 28Z" fill="#ffb900"/><ellipse cx="20.5" cy="11" rx="13" ry="8.5" fill="url(#orbh)"/></svg>
<svg style="left:87px;top:1047px" width="15" height="15" viewBox="0 0 48 48"><circle cx="24" cy="24" r="21" fill="#db3a2c"/><path d="M24 24 L42.2 13.5 A21 21 0 0 1 24 45Z" fill="#fcd116"/><path d="M24 24 L24 45 A21 21 0 0 1 5.8 13.5Z" fill="#3aaa48"/><circle cx="24" cy="24" r="10" fill="#fff"/><circle cx="24" cy="24" r="7.6" fill="#3a7ad8"/></svg>
<div class="a" style="left:165px;top:1034px;width:154px;height:43px;border:1px solid rgba(160,190,220,.45);border-radius:2px;background:radial-gradient(ellipse 34px 8px at 50% 100%,rgba(245,235,255,1) 0%,rgba(180,140,255,.7) 45%,rgba(80,50,220,0) 100%),radial-gradient(ellipse 80px 18px at 50% 100%,rgba(100,60,230,.85) 0%,rgba(60,40,180,0) 100%),linear-gradient(100deg,#7888b0 0%,#3c4a98 15%,#22268c 42%,#1c2474 70%,#1a2c5c 100%);box-shadow:inset 0 0 0 1px rgba(255,255,255,.12)"></div><svg style="left:179px;top:1048px" width="16" height="16"><use href="#drive" width="16" height="16"/></svg><div class="t" style="left:199px;top:1048px;font-size:16.5px;color:#fff;text-shadow:0 0 2px rgba(0,0,0,.5)">SYSTEM (C:)</div>
<div class="a" style="left:325px;top:1034px;width:154px;height:43px;border:1px solid rgba(160,190,220,.45);border-radius:2px;background:linear-gradient(180deg,rgba(255,255,255,.08),rgba(255,255,255,.02));box-shadow:inset 0 0 0 1px rgba(255,255,255,.12)"></div><svg style="left:338px;top:1048px" width="16" height="13"><use href="#folder" width="16" height="13"/></svg><div class="t" style="left:359px;top:1048px;font-size:16.5px;color:#fff;text-shadow:0 0 2px rgba(0,0,0,.5)">ОС</div>
<div class="a" style="left:485px;top:1034px;width:154px;height:43px;border:1px solid rgba(160,190,220,.45);border-radius:2px;background:linear-gradient(180deg,rgba(255,255,255,.08),rgba(255,255,255,.02));box-shadow:inset 0 0 0 1px rgba(255,255,255,.12)"></div><svg style="left:498px;top:1047px" width="16" height="16"><rect x="1" y="1" width="14" height="14" fill="#fff" stroke="#8aa"/><rect x="0" y="3" width="9" height="9" fill="#1a4ab0"/><text x="4.5" y="10.5" font-size="8" font-weight="bold" fill="#fff" text-anchor="middle" font-family="Liberation Sans">W</text></svg><div class="t" style="left:519px;top:1048px;font-size:16.5px;color:#fff;text-shadow:0 0 2px rgba(0,0,0,.5)">Документ1 ...</div>
<svg style="left:1743px;top:1038px" width="14" height="16" viewBox="0 0 14 16"><path d="M4 2 L7 5 V3 H10 V9 H4 V6 L1 6Z" fill="#38c838" stroke="#1a7a1a" stroke-width=".6"/><path d="M3 9 L11 7 L13 12 L5 14Z" fill="#7a7ab0" stroke="#c8c8d8" stroke-width=".8"/></svg>
<svg style="left:1761px;top:1038px" width="16" height="16" viewBox="0 0 16 16"><path d="M1 1 H4.5 V7 L10 1 H15 L8 8 L13 15 H1Z" fill="#9a9a9a" stroke="#eee" stroke-width=".7"/><path d="M9 15.5 L12 9.5 L15.5 15.5Z" fill="#f8e020" stroke="#333" stroke-width=".7"/><path d="M12 11.5 V13.5" stroke="#222" stroke-width=".8"/></svg>
<svg style="left:1779px;top:1038px" width="17" height="16" viewBox="0 0 17 16"><ellipse cx="6" cy="6" rx="5" ry="5" fill="#e8e8e8"/><circle cx="11" cy="10" r="5" fill="#f08a10" stroke="#fff" stroke-width=".8"/><text x="11" y="13" font-family="Liberation Sans" font-size="8" font-weight="bold" fill="#222" text-anchor="middle">3</text></svg>
<svg style="left:1743px;top:1056px" width="16" height="16" viewBox="0 0 16 16"><rect x="0.5" y="0.5" width="15" height="15" fill="#f07830" stroke="#222" stroke-width=".8"/><rect x="2" y="2" width="12" height="5" fill="#fff"/><path d="M3 6 L5 3 L7 6 L9 3 L11 6" stroke="#2a4ab0" stroke-width="1.2" fill="none"/><rect x="2" y="8" width="12" height="5" fill="#ffe0c8"/></svg>
<svg style="left:1761px;top:1056px" width="16" height="16" viewBox="0 0 16 16"><path d="M1 5.5 H4 L8 1.5 V14.5 L4 10.5 H1Z" fill="#e8ecf4" stroke="#222" stroke-width=".7"/><path d="M10 6 Q11 8 10 10 M12 4 Q14 8 12 12" stroke="#80d080" stroke-width="1.1" fill="none"/></svg>
<div class="a" style="left:1697px;top:1047px;width:16px;height:16px;background:rgba(30,70,120,.6)"></div>
<div class="t" style="left:1698.5px;top:1049.71px;font-size:11px;color:#fff;font-weight:normal;">RU</div>
<div class="t" style="left:1835.5px;top:1033.92px;font-size:16px;color:#fff;font-weight:normal;">14:49</div>
<div class="t" style="left:1824.6px;top:1060px;font-size:16.5px;color:#fff">вторник</div>
</body></html>
